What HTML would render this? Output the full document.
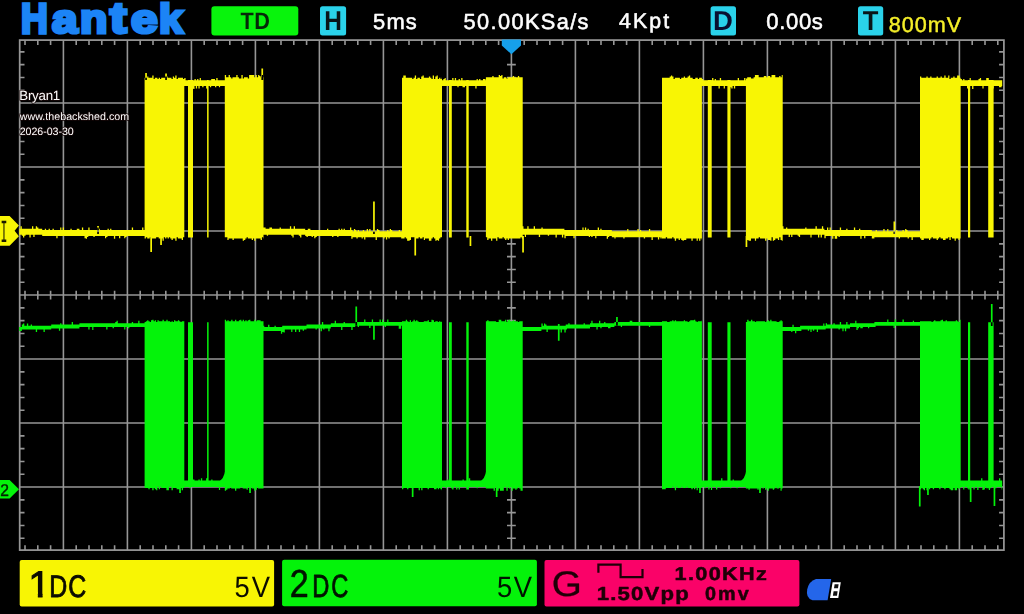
<!DOCTYPE html>
<html><head><meta charset="utf-8"><title>Hantek</title>
<style>
html,body{margin:0;padding:0;background:#000;}
body{width:1024px;height:614px;overflow:hidden;position:relative;}
svg{position:absolute;left:0;top:0;display:block;}
#labels{opacity:0.999;}
text{font-family:"Liberation Sans",sans-serif;white-space:pre;text-rendering:geometricPrecision;}
#logo{position:absolute;left:0;height:0;width:200px;font-family:"Liberation Sans",sans-serif;font-weight:bold;color:#1c84f6;-webkit-text-stroke:3.4px #1c84f6;line-height:1;white-space:nowrap;}
#logo span{position:absolute;top:0;transform-origin:0 84.65%;line-height:1;}
</style></head><body>
<svg width="1024" height="614" viewBox="0 0 1024 614">
<defs><clipPath id="c12"><path d="M30.60 569.20H42.55V598.20H37.86V592.24H30.60Z"/></clipPath></defs><rect width="1024" height="614" fill="#000"/>
<g id="grid" fill="none"><path d="M63.40 40.10L63.40 550.10" stroke="#969696" stroke-width="1.6"/><path d="M127.40 40.10L127.40 550.10" stroke="#969696" stroke-width="1.6"/><path d="M191.40 40.10L191.40 550.10" stroke="#969696" stroke-width="1.6"/><path d="M255.40 40.10L255.40 550.10" stroke="#969696" stroke-width="1.6"/><path d="M319.40 40.10L319.40 550.10" stroke="#969696" stroke-width="1.6"/><path d="M383.40 40.10L383.40 550.10" stroke="#969696" stroke-width="1.6"/><path d="M447.40 40.10L447.40 550.10" stroke="#969696" stroke-width="1.6"/><path d="M511.40 40.10L511.40 550.10" stroke="#969696" stroke-width="1.6"/><path d="M575.40 40.10L575.40 550.10" stroke="#969696" stroke-width="1.6"/><path d="M639.40 40.10L639.40 550.10" stroke="#969696" stroke-width="1.6"/><path d="M703.40 40.10L703.40 550.10" stroke="#969696" stroke-width="1.6"/><path d="M767.40 40.10L767.40 550.10" stroke="#969696" stroke-width="1.6"/><path d="M831.40 40.10L831.40 550.10" stroke="#969696" stroke-width="1.6"/><path d="M895.40 40.10L895.40 550.10" stroke="#969696" stroke-width="1.6"/><path d="M959.40 40.10L959.40 550.10" stroke="#969696" stroke-width="1.6"/><path d="M19.70 103.04L1003.90 103.04" stroke="#969696" stroke-width="1.6"/><path d="M19.70 167.04L1003.90 167.04" stroke="#969696" stroke-width="1.6"/><path d="M19.70 231.04L1003.90 231.04" stroke="#969696" stroke-width="1.6"/><path d="M19.70 295.04L1003.90 295.04" stroke="#969696" stroke-width="1.6"/><path d="M19.70 359.04L1003.90 359.04" stroke="#969696" stroke-width="1.6"/><path d="M19.70 423.04L1003.90 423.04" stroke="#969696" stroke-width="1.6"/><path d="M19.70 487.04L1003.90 487.04" stroke="#969696" stroke-width="1.6"/><rect x="19.7" y="40.1" width="984.20" height="510.00" fill="none" stroke="#969696" stroke-width="1.75"/><path d="M25.00 40.1v4.8M25.00 550.1v-4.8M25.00 290.64v8.8M37.80 40.1v4.8M37.80 550.1v-4.8M37.80 290.64v8.8M50.60 40.1v4.8M50.60 550.1v-4.8M50.60 290.64v8.8M76.20 40.1v4.8M76.20 550.1v-4.8M76.20 290.64v8.8M89.00 40.1v4.8M89.00 550.1v-4.8M89.00 290.64v8.8M101.80 40.1v4.8M101.80 550.1v-4.8M101.80 290.64v8.8M114.60 40.1v4.8M114.60 550.1v-4.8M114.60 290.64v8.8M140.20 40.1v4.8M140.20 550.1v-4.8M140.20 290.64v8.8M153.00 40.1v4.8M153.00 550.1v-4.8M153.00 290.64v8.8M165.80 40.1v4.8M165.80 550.1v-4.8M165.80 290.64v8.8M178.60 40.1v4.8M178.60 550.1v-4.8M178.60 290.64v8.8M204.20 40.1v4.8M204.20 550.1v-4.8M204.20 290.64v8.8M217.00 40.1v4.8M217.00 550.1v-4.8M217.00 290.64v8.8M229.80 40.1v4.8M229.80 550.1v-4.8M229.80 290.64v8.8M242.60 40.1v4.8M242.60 550.1v-4.8M242.60 290.64v8.8M268.20 40.1v4.8M268.20 550.1v-4.8M268.20 290.64v8.8M281.00 40.1v4.8M281.00 550.1v-4.8M281.00 290.64v8.8M293.80 40.1v4.8M293.80 550.1v-4.8M293.80 290.64v8.8M306.60 40.1v4.8M306.60 550.1v-4.8M306.60 290.64v8.8M332.20 40.1v4.8M332.20 550.1v-4.8M332.20 290.64v8.8M345.00 40.1v4.8M345.00 550.1v-4.8M345.00 290.64v8.8M357.80 40.1v4.8M357.80 550.1v-4.8M357.80 290.64v8.8M370.60 40.1v4.8M370.60 550.1v-4.8M370.60 290.64v8.8M396.20 40.1v4.8M396.20 550.1v-4.8M396.20 290.64v8.8M409.00 40.1v4.8M409.00 550.1v-4.8M409.00 290.64v8.8M421.80 40.1v4.8M421.80 550.1v-4.8M421.80 290.64v8.8M434.60 40.1v4.8M434.60 550.1v-4.8M434.60 290.64v8.8M460.20 40.1v4.8M460.20 550.1v-4.8M460.20 290.64v8.8M473.00 40.1v4.8M473.00 550.1v-4.8M473.00 290.64v8.8M485.80 40.1v4.8M485.80 550.1v-4.8M485.80 290.64v8.8M498.60 40.1v4.8M498.60 550.1v-4.8M498.60 290.64v8.8M524.20 40.1v4.8M524.20 550.1v-4.8M524.20 290.64v8.8M537.00 40.1v4.8M537.00 550.1v-4.8M537.00 290.64v8.8M549.80 40.1v4.8M549.80 550.1v-4.8M549.80 290.64v8.8M562.60 40.1v4.8M562.60 550.1v-4.8M562.60 290.64v8.8M588.20 40.1v4.8M588.20 550.1v-4.8M588.20 290.64v8.8M601.00 40.1v4.8M601.00 550.1v-4.8M601.00 290.64v8.8M613.80 40.1v4.8M613.80 550.1v-4.8M613.80 290.64v8.8M626.60 40.1v4.8M626.60 550.1v-4.8M626.60 290.64v8.8M652.20 40.1v4.8M652.20 550.1v-4.8M652.20 290.64v8.8M665.00 40.1v4.8M665.00 550.1v-4.8M665.00 290.64v8.8M677.80 40.1v4.8M677.80 550.1v-4.8M677.80 290.64v8.8M690.60 40.1v4.8M690.60 550.1v-4.8M690.60 290.64v8.8M716.20 40.1v4.8M716.20 550.1v-4.8M716.20 290.64v8.8M729.00 40.1v4.8M729.00 550.1v-4.8M729.00 290.64v8.8M741.80 40.1v4.8M741.80 550.1v-4.8M741.80 290.64v8.8M754.60 40.1v4.8M754.60 550.1v-4.8M754.60 290.64v8.8M780.20 40.1v4.8M780.20 550.1v-4.8M780.20 290.64v8.8M793.00 40.1v4.8M793.00 550.1v-4.8M793.00 290.64v8.8M805.80 40.1v4.8M805.80 550.1v-4.8M805.80 290.64v8.8M818.60 40.1v4.8M818.60 550.1v-4.8M818.60 290.64v8.8M844.20 40.1v4.8M844.20 550.1v-4.8M844.20 290.64v8.8M857.00 40.1v4.8M857.00 550.1v-4.8M857.00 290.64v8.8M869.80 40.1v4.8M869.80 550.1v-4.8M869.80 290.64v8.8M882.60 40.1v4.8M882.60 550.1v-4.8M882.60 290.64v8.8M908.20 40.1v4.8M908.20 550.1v-4.8M908.20 290.64v8.8M921.00 40.1v4.8M921.00 550.1v-4.8M921.00 290.64v8.8M933.80 40.1v4.8M933.80 550.1v-4.8M933.80 290.64v8.8M946.60 40.1v4.8M946.60 550.1v-4.8M946.60 290.64v8.8M972.20 40.1v4.8M972.20 550.1v-4.8M972.20 290.64v8.8M985.00 40.1v4.8M985.00 550.1v-4.8M985.00 290.64v8.8M997.80 40.1v4.8M997.80 550.1v-4.8M997.80 290.64v8.8M19.7 51.84h4.8M1003.9 51.84h-4.8M19.7 64.64h4.8M1003.9 64.64h-4.8M507.00 64.64h8.8M19.7 77.44h4.8M1003.9 77.44h-4.8M507.00 77.44h8.8M19.7 90.24h4.8M1003.9 90.24h-4.8M507.00 90.24h8.8M19.7 115.84h4.8M1003.9 115.84h-4.8M507.00 115.84h8.8M19.7 128.64h4.8M1003.9 128.64h-4.8M507.00 128.64h8.8M19.7 141.44h4.8M1003.9 141.44h-4.8M507.00 141.44h8.8M19.7 154.24h4.8M1003.9 154.24h-4.8M507.00 154.24h8.8M19.7 179.84h4.8M1003.9 179.84h-4.8M507.00 179.84h8.8M19.7 192.64h4.8M1003.9 192.64h-4.8M507.00 192.64h8.8M19.7 205.44h4.8M1003.9 205.44h-4.8M507.00 205.44h8.8M19.7 218.24h4.8M1003.9 218.24h-4.8M507.00 218.24h8.8M19.7 243.84h4.8M1003.9 243.84h-4.8M507.00 243.84h8.8M19.7 256.64h4.8M1003.9 256.64h-4.8M507.00 256.64h8.8M19.7 269.44h4.8M1003.9 269.44h-4.8M507.00 269.44h8.8M19.7 282.24h4.8M1003.9 282.24h-4.8M507.00 282.24h8.8M19.7 307.84h4.8M1003.9 307.84h-4.8M507.00 307.84h8.8M19.7 320.64h4.8M1003.9 320.64h-4.8M507.00 320.64h8.8M19.7 333.44h4.8M1003.9 333.44h-4.8M507.00 333.44h8.8M19.7 346.24h4.8M1003.9 346.24h-4.8M507.00 346.24h8.8M19.7 371.84h4.8M1003.9 371.84h-4.8M507.00 371.84h8.8M19.7 384.64h4.8M1003.9 384.64h-4.8M507.00 384.64h8.8M19.7 397.44h4.8M1003.9 397.44h-4.8M507.00 397.44h8.8M19.7 410.24h4.8M1003.9 410.24h-4.8M507.00 410.24h8.8M19.7 435.84h4.8M1003.9 435.84h-4.8M507.00 435.84h8.8M19.7 448.64h4.8M1003.9 448.64h-4.8M507.00 448.64h8.8M19.7 461.44h4.8M1003.9 461.44h-4.8M507.00 461.44h8.8M19.7 474.24h4.8M1003.9 474.24h-4.8M507.00 474.24h8.8M19.7 499.84h4.8M1003.9 499.84h-4.8M507.00 499.84h8.8M19.7 512.64h4.8M1003.9 512.64h-4.8M507.00 512.64h8.8M19.7 525.44h4.8M1003.9 525.44h-4.8M507.00 525.44h8.8M19.7 538.24h4.8M1003.9 538.24h-4.8M507.00 538.24h8.8" stroke="#969696" stroke-width="1.6" fill="none"/></g>
<g id="wave"><path fill="#f8f504" d="M144.6 77.8L145.9 77.8L145.9 77.8L147.2 77.8L147.2 76.5L148.4 76.5L148.4 77.8L149.7 77.8L149.7 77.8L151.0 77.8L151.0 77.8L152.3 77.8L152.3 75.6L153.6 75.6L153.6 79.1L154.8 79.1L154.8 77.8L156.1 77.8L156.1 77.8L157.4 77.8L157.4 79.1L158.7 79.1L158.7 77.8L160.0 77.8L160.0 79.1L161.2 79.1L161.2 77.8L162.5 77.8L162.5 77.8L163.8 77.8L163.8 77.8L165.1 77.8L165.1 76.5L166.4 76.5L166.4 76.5L167.6 76.5L167.6 77.8L168.9 77.8L168.9 77.8L170.2 77.8L170.2 77.8L171.5 77.8L171.5 79.1L172.8 79.1L172.8 76.5L174.0 76.5L174.0 77.8L175.3 77.8L175.3 75.6L176.6 75.6L176.6 79.1L177.9 79.1L177.9 77.8L179.2 77.8L179.2 77.8L180.4 77.8L180.4 77.8L181.7 77.8L181.7 77.8L183.0 77.8L183.0 79.1L184.3 79.1L184.3 77.8L184.3 77.8L184.3 237.3L184.3 237.3L184.3 237.3L183.0 237.3L183.0 239.9L181.7 239.9L181.7 238.6L180.4 238.6L180.4 238.6L179.2 238.6L179.2 238.6L177.9 238.6L177.9 237.3L176.6 237.3L176.6 240.8L175.3 240.8L175.3 238.6L174.0 238.6L174.0 238.6L172.8 238.6L172.8 239.9L171.5 239.9L171.5 238.6L170.2 238.6L170.2 237.3L168.9 237.3L168.9 238.6L167.6 238.6L167.6 237.3L166.4 237.3L166.4 238.6L165.1 238.6L165.1 237.3L163.8 237.3L163.8 240.8L162.5 240.8L162.5 238.6L161.2 238.6L161.2 238.6L160.0 238.6L160.0 238.6L158.7 238.6L158.7 237.3L157.4 237.3L157.4 237.3L156.1 237.3L156.1 238.6L154.8 238.6L154.8 238.6L153.6 238.6L153.6 238.6L152.3 238.6L152.3 238.6L151.0 238.6L151.0 237.3L149.7 237.3L149.7 238.6L148.4 238.6L148.4 238.6L147.2 238.6L147.2 237.3L145.9 237.3L145.9 238.6L144.6 238.6ZM184.3 78.0L185.6 78.0L185.6 80.3L186.9 80.3L186.9 80.3L188.1 80.3L188.1 80.3L189.4 80.3L189.4 80.3L190.7 80.3L190.7 80.3L192.0 80.3L192.0 80.3L193.3 80.3L193.3 80.3L194.5 80.3L194.5 79.1L195.8 79.1L195.8 80.3L197.1 80.3L197.1 79.1L198.4 79.1L198.4 80.3L199.7 80.3L199.7 78.0L200.9 78.0L200.9 80.3L202.2 80.3L202.2 80.3L203.5 80.3L203.5 80.3L204.8 80.3L204.8 80.3L206.1 80.3L206.1 80.3L207.3 80.3L207.3 80.3L208.6 80.3L208.6 80.3L209.9 80.3L209.9 80.3L211.2 80.3L211.2 79.1L212.5 79.1L212.5 79.1L213.7 79.1L213.7 79.1L215.0 79.1L215.0 80.3L216.3 80.3L216.3 78.0L217.6 78.0L217.6 80.3L218.9 80.3L218.9 80.3L220.1 80.3L220.1 80.3L221.4 80.3L221.4 80.3L222.7 80.3L222.7 80.3L224.0 80.3L224.0 80.3L225.3 80.3L225.3 78.0L225.3 78.0L225.3 86.1L225.3 86.1L225.3 86.1L224.0 86.1L224.0 86.1L222.7 86.1L222.7 86.1L221.4 86.1L221.4 86.1L220.1 86.1L220.1 87.3L218.9 87.3L218.9 86.1L217.6 86.1L217.6 86.1L216.3 86.1L216.3 87.3L215.0 87.3L215.0 86.1L213.7 86.1L213.7 86.1L212.5 86.1L212.5 86.1L211.2 86.1L211.2 87.3L209.9 87.3L209.9 86.1L208.6 86.1L208.6 86.1L207.3 86.1L207.3 88.4L206.1 88.4L206.1 86.1L204.8 86.1L204.8 86.1L203.5 86.1L203.5 87.3L202.2 87.3L202.2 86.1L200.9 86.1L200.9 86.1L199.7 86.1L199.7 88.4L198.4 88.4L198.4 86.1L197.1 86.1L197.1 88.4L195.8 88.4L195.8 86.1L194.5 86.1L194.5 89.0L193.3 89.0L193.3 88.4L192.0 88.4L192.0 86.1L190.7 86.1L190.7 88.4L189.4 88.4L189.4 86.1L188.1 86.1L188.1 86.1L186.9 86.1L186.9 86.1L185.6 86.1L185.6 86.1L184.3 86.1ZM188.0 80H193.0V237.6H188.0ZM207.1 80H208.6V237.6H207.1ZM224.8 75.1L226.1 75.1L226.1 77.3L227.4 77.3L227.4 77.3L228.6 77.3L228.6 75.1L229.9 75.1L229.9 77.3L231.2 77.3L231.2 78.6L232.5 78.6L232.5 77.3L233.8 77.3L233.8 77.3L235.0 77.3L235.0 77.3L236.3 77.3L236.3 75.1L237.6 75.1L237.6 77.3L238.9 77.3L238.9 78.6L240.2 78.6L240.2 78.6L241.4 78.6L241.4 75.1L242.7 75.1L242.7 78.6L244.0 78.6L244.0 77.3L245.3 77.3L245.3 77.3L246.6 77.3L246.6 77.3L247.8 77.3L247.8 78.6L249.1 78.6L249.1 75.1L250.4 75.1L250.4 75.1L251.7 75.1L251.7 75.1L253.0 75.1L253.0 75.1L254.2 75.1L254.2 77.3L255.5 77.3L255.5 75.1L256.8 75.1L256.8 77.3L258.1 77.3L258.1 75.1L259.4 75.1L259.4 76.0L260.6 76.0L260.6 77.3L261.9 77.3L261.9 75.1L263.2 75.1L263.2 77.3L263.5 77.3L263.5 238.6L263.2 238.6L263.2 237.3L261.9 237.3L261.9 239.9L260.6 239.9L260.6 238.6L259.4 238.6L259.4 238.6L258.1 238.6L258.1 238.6L256.8 238.6L256.8 238.6L255.5 238.6L255.5 240.8L254.2 240.8L254.2 238.6L253.0 238.6L253.0 239.9L251.7 239.9L251.7 238.6L250.4 238.6L250.4 238.6L249.1 238.6L249.1 238.6L247.8 238.6L247.8 237.3L246.6 237.3L246.6 238.6L245.3 238.6L245.3 239.9L244.0 239.9L244.0 240.8L242.7 240.8L242.7 238.6L241.4 238.6L241.4 238.6L240.2 238.6L240.2 238.6L238.9 238.6L238.9 238.6L237.6 238.6L237.6 238.6L236.3 238.6L236.3 238.6L235.0 238.6L235.0 238.6L233.8 238.6L233.8 239.9L232.5 239.9L232.5 238.6L231.2 238.6L231.2 238.6L229.9 238.6L229.9 238.6L228.6 238.6L228.6 239.9L227.4 239.9L227.4 237.3L226.1 237.3L226.1 237.3L224.8 237.3ZM402.0 77.8L403.3 77.8L403.3 75.6L404.6 75.6L404.6 75.6L405.8 75.6L405.8 77.8L407.1 77.8L407.1 77.8L408.4 77.8L408.4 77.8L409.7 77.8L409.7 77.8L411.0 77.8L411.0 77.8L412.2 77.8L412.2 79.1L413.5 79.1L413.5 77.8L414.8 77.8L414.8 75.6L416.1 75.6L416.1 79.1L417.4 79.1L417.4 77.8L418.6 77.8L418.6 77.8L419.9 77.8L419.9 79.1L421.2 79.1L421.2 76.5L422.5 76.5L422.5 75.6L423.8 75.6L423.8 77.8L425.0 77.8L425.0 77.8L426.3 77.8L426.3 77.8L427.6 77.8L427.6 77.8L428.9 77.8L428.9 76.5L430.2 76.5L430.2 77.8L431.4 77.8L431.4 79.1L432.7 79.1L432.7 75.6L434.0 75.6L434.0 79.1L435.3 79.1L435.3 76.5L436.6 76.5L436.6 75.6L437.8 75.6L437.8 79.1L439.1 79.1L439.1 77.8L440.4 77.8L440.4 79.1L441.7 79.1L441.7 77.8L442.0 77.8L442.0 237.3L441.7 237.3L441.7 237.3L440.4 237.3L440.4 238.6L439.1 238.6L439.1 240.8L437.8 240.8L437.8 239.9L436.6 239.9L436.6 240.8L435.3 240.8L435.3 238.6L434.0 238.6L434.0 237.3L432.7 237.3L432.7 238.6L431.4 238.6L431.4 240.8L430.2 240.8L430.2 240.8L428.9 240.8L428.9 238.6L427.6 238.6L427.6 238.6L426.3 238.6L426.3 238.6L425.0 238.6L425.0 239.9L423.8 239.9L423.8 237.3L422.5 237.3L422.5 238.6L421.2 238.6L421.2 238.6L419.9 238.6L419.9 237.3L418.6 237.3L418.6 238.6L417.4 238.6L417.4 238.6L416.1 238.6L416.1 238.6L414.8 238.6L414.8 237.3L413.5 237.3L413.5 237.3L412.2 237.3L412.2 237.3L411.0 237.3L411.0 239.9L409.7 239.9L409.7 240.8L408.4 240.8L408.4 240.8L407.1 240.8L407.1 238.6L405.8 238.6L405.8 237.3L404.6 237.3L404.6 238.6L403.3 238.6L403.3 238.6L402.0 238.6ZM442.0 80.3L443.3 80.3L443.3 79.1L444.6 79.1L444.6 78.0L445.8 78.0L445.8 80.3L447.1 80.3L447.1 80.3L448.4 80.3L448.4 80.3L449.7 80.3L449.7 80.3L451.0 80.3L451.0 80.3L452.2 80.3L452.2 78.0L453.5 78.0L453.5 80.3L454.8 80.3L454.8 78.0L456.1 78.0L456.1 80.3L457.4 80.3L457.4 80.3L458.6 80.3L458.6 79.1L459.9 79.1L459.9 80.3L461.2 80.3L461.2 78.0L462.5 78.0L462.5 80.3L463.8 80.3L463.8 80.3L465.0 80.3L465.0 80.3L466.3 80.3L466.3 80.3L467.6 80.3L467.6 80.3L468.9 80.3L468.9 80.3L470.2 80.3L470.2 80.3L471.4 80.3L471.4 80.3L472.7 80.3L472.7 80.3L474.0 80.3L474.0 80.3L475.3 80.3L475.3 80.3L476.6 80.3L476.6 79.1L477.8 79.1L477.8 80.3L479.1 80.3L479.1 79.1L480.4 79.1L480.4 80.3L481.7 80.3L481.7 80.3L483.0 80.3L483.0 79.1L484.2 79.1L484.2 79.1L485.5 79.1L485.5 80.3L486.4 80.3L486.4 86.1L485.5 86.1L485.5 86.1L484.2 86.1L484.2 86.1L483.0 86.1L483.0 86.1L481.7 86.1L481.7 86.1L480.4 86.1L480.4 86.1L479.1 86.1L479.1 86.1L477.8 86.1L477.8 86.1L476.6 86.1L476.6 88.4L475.3 88.4L475.3 86.1L474.0 86.1L474.0 86.1L472.7 86.1L472.7 86.1L471.4 86.1L471.4 86.1L470.2 86.1L470.2 86.1L468.9 86.1L468.9 86.1L467.6 86.1L467.6 86.1L466.3 86.1L466.3 86.1L465.0 86.1L465.0 87.3L463.8 87.3L463.8 87.3L462.5 87.3L462.5 86.1L461.2 86.1L461.2 86.1L459.9 86.1L459.9 86.1L458.6 86.1L458.6 87.3L457.4 87.3L457.4 86.1L456.1 86.1L456.1 86.1L454.8 86.1L454.8 86.1L453.5 86.1L453.5 86.1L452.2 86.1L452.2 86.1L451.0 86.1L451.0 87.3L449.7 87.3L449.7 86.1L448.4 86.1L448.4 86.1L447.1 86.1L447.1 86.1L445.8 86.1L445.8 86.1L444.6 86.1L444.6 86.1L443.3 86.1L443.3 86.1L442.0 86.1ZM449.0 80H451.8V237.6H449.0ZM466.3 80H468.7V237.6H466.3ZM485.9 77.3L487.2 77.3L487.2 77.3L488.5 77.3L488.5 77.3L489.7 77.3L489.7 77.3L491.0 77.3L491.0 77.3L492.3 77.3L492.3 76.0L493.6 76.0L493.6 77.3L494.9 77.3L494.9 77.3L496.1 77.3L496.1 77.3L497.4 77.3L497.4 77.3L498.7 77.3L498.7 75.1L500.0 75.1L500.0 76.0L501.3 76.0L501.3 75.1L502.5 75.1L502.5 78.6L503.8 78.6L503.8 77.3L505.1 77.3L505.1 77.3L506.4 77.3L506.4 78.6L507.7 78.6L507.7 77.3L508.9 77.3L508.9 77.3L510.2 77.3L510.2 77.3L511.5 77.3L511.5 77.3L512.8 77.3L512.8 76.0L514.1 76.0L514.1 77.3L515.3 77.3L515.3 77.3L516.6 77.3L516.6 77.3L517.9 77.3L517.9 76.0L519.2 76.0L519.2 77.3L520.5 77.3L520.5 77.3L521.7 77.3L521.7 77.3L522.7 77.3L522.7 238.6L521.7 238.6L521.7 237.3L520.5 237.3L520.5 238.6L519.2 238.6L519.2 238.6L517.9 238.6L517.9 238.6L516.6 238.6L516.6 238.6L515.3 238.6L515.3 238.6L514.1 238.6L514.1 238.6L512.8 238.6L512.8 238.6L511.5 238.6L511.5 238.6L510.2 238.6L510.2 238.6L508.9 238.6L508.9 239.9L507.7 239.9L507.7 238.6L506.4 238.6L506.4 239.9L505.1 239.9L505.1 238.6L503.8 238.6L503.8 237.3L502.5 237.3L502.5 238.6L501.3 238.6L501.3 238.6L500.0 238.6L500.0 238.6L498.7 238.6L498.7 237.3L497.4 237.3L497.4 240.8L496.1 240.8L496.1 238.6L494.9 238.6L494.9 238.6L493.6 238.6L493.6 238.6L492.3 238.6L492.3 240.8L491.0 240.8L491.0 238.6L489.7 238.6L489.7 238.6L488.5 238.6L488.5 239.9L487.2 239.9L487.2 237.3L485.9 237.3ZM662.0 77.8L663.3 77.8L663.3 77.8L664.6 77.8L664.6 77.8L665.8 77.8L665.8 77.8L667.1 77.8L667.1 77.8L668.4 77.8L668.4 77.8L669.7 77.8L669.7 76.5L671.0 76.5L671.0 75.6L672.2 75.6L672.2 76.5L673.5 76.5L673.5 79.1L674.8 79.1L674.8 77.8L676.1 77.8L676.1 77.8L677.4 77.8L677.4 77.8L678.6 77.8L678.6 77.8L679.9 77.8L679.9 79.1L681.2 79.1L681.2 77.8L682.5 77.8L682.5 77.8L683.8 77.8L683.8 76.5L685.0 76.5L685.0 77.8L686.3 77.8L686.3 77.8L687.6 77.8L687.6 76.5L688.9 76.5L688.9 75.6L690.2 75.6L690.2 77.8L691.4 77.8L691.4 77.8L692.7 77.8L692.7 79.1L694.0 79.1L694.0 79.1L695.3 79.1L695.3 77.8L696.6 77.8L696.6 77.8L697.8 77.8L697.8 79.1L699.1 79.1L699.1 77.8L700.4 77.8L700.4 77.8L701.7 77.8L701.7 77.8L701.9 77.8L701.9 239.9L701.7 239.9L701.7 238.6L700.4 238.6L700.4 240.8L699.1 240.8L699.1 238.6L697.8 238.6L697.8 240.8L696.6 240.8L696.6 238.6L695.3 238.6L695.3 238.6L694.0 238.6L694.0 238.6L692.7 238.6L692.7 240.8L691.4 240.8L691.4 238.6L690.2 238.6L690.2 238.6L688.9 238.6L688.9 238.6L687.6 238.6L687.6 238.6L686.3 238.6L686.3 239.9L685.0 239.9L685.0 239.9L683.8 239.9L683.8 240.8L682.5 240.8L682.5 239.9L681.2 239.9L681.2 238.6L679.9 238.6L679.9 239.9L678.6 239.9L678.6 238.6L677.4 238.6L677.4 238.6L676.1 238.6L676.1 240.8L674.8 240.8L674.8 238.6L673.5 238.6L673.5 237.3L672.2 237.3L672.2 238.6L671.0 238.6L671.0 238.6L669.7 238.6L669.7 238.6L668.4 238.6L668.4 238.6L667.1 238.6L667.1 237.3L665.8 237.3L665.8 238.6L664.6 238.6L664.6 238.6L663.3 238.6L663.3 238.6L662.0 238.6ZM701.9 79.1L703.2 79.1L703.2 80.3L704.5 80.3L704.5 80.3L705.7 80.3L705.7 80.3L707.0 80.3L707.0 80.3L708.3 80.3L708.3 80.3L709.6 80.3L709.6 80.3L710.9 80.3L710.9 80.3L712.1 80.3L712.1 78.0L713.4 78.0L713.4 80.3L714.7 80.3L714.7 79.1L716.0 79.1L716.0 80.3L717.3 80.3L717.3 80.3L718.5 80.3L718.5 80.3L719.8 80.3L719.8 78.0L721.1 78.0L721.1 80.3L722.4 80.3L722.4 80.3L723.7 80.3L723.7 80.3L724.9 80.3L724.9 80.3L726.2 80.3L726.2 80.3L727.5 80.3L727.5 80.3L728.8 80.3L728.8 80.3L730.1 80.3L730.1 80.3L731.3 80.3L731.3 80.3L732.6 80.3L732.6 80.3L733.9 80.3L733.9 80.3L735.2 80.3L735.2 80.3L736.5 80.3L736.5 80.3L737.7 80.3L737.7 78.0L739.0 78.0L739.0 80.3L740.3 80.3L740.3 80.3L741.6 80.3L741.6 80.3L742.9 80.3L742.9 80.3L744.1 80.3L744.1 78.0L745.4 78.0L745.4 80.3L746.4 80.3L746.4 86.1L745.4 86.1L745.4 86.1L744.1 86.1L744.1 86.1L742.9 86.1L742.9 86.1L741.6 86.1L741.6 86.1L740.3 86.1L740.3 86.1L739.0 86.1L739.0 86.1L737.7 86.1L737.7 86.1L736.5 86.1L736.5 86.1L735.2 86.1L735.2 88.4L733.9 88.4L733.9 86.1L732.6 86.1L732.6 88.4L731.3 88.4L731.3 87.3L730.1 87.3L730.1 86.1L728.8 86.1L728.8 87.3L727.5 87.3L727.5 86.1L726.2 86.1L726.2 86.1L724.9 86.1L724.9 88.4L723.7 88.4L723.7 86.1L722.4 86.1L722.4 86.1L721.1 86.1L721.1 86.1L719.8 86.1L719.8 88.4L718.5 88.4L718.5 86.1L717.3 86.1L717.3 86.1L716.0 86.1L716.0 86.1L714.7 86.1L714.7 86.1L713.4 86.1L713.4 86.1L712.1 86.1L712.1 86.1L710.9 86.1L710.9 87.3L709.6 87.3L709.6 86.1L708.3 86.1L708.3 86.1L707.0 86.1L707.0 86.1L705.7 86.1L705.7 86.1L704.5 86.1L704.5 86.1L703.2 86.1L703.2 86.1L701.9 86.1ZM707.8 80H711.7V237.6H707.8ZM727.4 80H730.5V237.6H727.4ZM745.9 78.6L747.2 78.6L747.2 77.3L748.5 77.3L748.5 77.3L749.7 77.3L749.7 77.3L751.0 77.3L751.0 78.6L752.3 78.6L752.3 78.6L753.6 78.6L753.6 77.3L754.9 77.3L754.9 75.1L756.1 75.1L756.1 75.1L757.4 75.1L757.4 75.1L758.7 75.1L758.7 77.3L760.0 77.3L760.0 77.3L761.3 77.3L761.3 77.3L762.5 77.3L762.5 77.3L763.8 77.3L763.8 76.0L765.1 76.0L765.1 76.0L766.4 76.0L766.4 77.3L767.7 77.3L767.7 76.0L768.9 76.0L768.9 76.0L770.2 76.0L770.2 77.3L771.5 77.3L771.5 75.1L772.8 75.1L772.8 75.1L774.1 75.1L774.1 75.1L775.3 75.1L775.3 77.3L776.6 77.3L776.6 77.3L777.9 77.3L777.9 77.3L779.2 77.3L779.2 76.0L780.5 76.0L780.5 77.3L781.7 77.3L781.7 75.1L782.7 75.1L782.7 240.8L781.7 240.8L781.7 239.9L780.5 239.9L780.5 237.3L779.2 237.3L779.2 239.9L777.9 239.9L777.9 238.6L776.6 238.6L776.6 238.6L775.3 238.6L775.3 239.9L774.1 239.9L774.1 240.8L772.8 240.8L772.8 237.3L771.5 237.3L771.5 240.8L770.2 240.8L770.2 239.9L768.9 239.9L768.9 239.9L767.7 239.9L767.7 238.6L766.4 238.6L766.4 240.8L765.1 240.8L765.1 238.6L763.8 238.6L763.8 238.6L762.5 238.6L762.5 238.6L761.3 238.6L761.3 238.6L760.0 238.6L760.0 237.3L758.7 237.3L758.7 238.6L757.4 238.6L757.4 238.6L756.1 238.6L756.1 240.8L754.9 240.8L754.9 238.6L753.6 238.6L753.6 238.6L752.3 238.6L752.3 238.6L751.0 238.6L751.0 240.8L749.7 240.8L749.7 240.8L748.5 240.8L748.5 239.9L747.2 239.9L747.2 238.6L745.9 238.6ZM920.0 76.5L921.3 76.5L921.3 77.8L922.6 77.8L922.6 77.8L923.8 77.8L923.8 77.8L925.1 77.8L925.1 77.8L926.4 77.8L926.4 76.5L927.7 76.5L927.7 77.8L929.0 77.8L929.0 77.8L930.2 77.8L930.2 76.5L931.5 76.5L931.5 77.8L932.8 77.8L932.8 77.8L934.1 77.8L934.1 77.8L935.4 77.8L935.4 77.8L936.6 77.8L936.6 76.5L937.9 76.5L937.9 77.8L939.2 77.8L939.2 77.8L940.5 77.8L940.5 76.5L941.8 76.5L941.8 77.8L943.0 77.8L943.0 77.8L944.3 77.8L944.3 75.6L945.6 75.6L945.6 77.8L946.9 77.8L946.9 77.8L948.2 77.8L948.2 75.6L949.4 75.6L949.4 79.1L950.7 79.1L950.7 77.8L952.0 77.8L952.0 77.8L953.3 77.8L953.3 76.5L954.6 76.5L954.6 77.8L955.8 77.8L955.8 77.8L957.1 77.8L957.1 75.6L958.4 75.6L958.4 75.6L959.7 75.6L959.7 77.8L960.6 77.8L960.6 238.6L959.7 238.6L959.7 239.9L958.4 239.9L958.4 238.6L957.1 238.6L957.1 238.6L955.8 238.6L955.8 240.8L954.6 240.8L954.6 238.6L953.3 238.6L953.3 238.6L952.0 238.6L952.0 237.3L950.7 237.3L950.7 239.9L949.4 239.9L949.4 237.3L948.2 237.3L948.2 238.6L946.9 238.6L946.9 238.6L945.6 238.6L945.6 239.9L944.3 239.9L944.3 239.9L943.0 239.9L943.0 238.6L941.8 238.6L941.8 238.6L940.5 238.6L940.5 237.3L939.2 237.3L939.2 238.6L937.9 238.6L937.9 239.9L936.6 239.9L936.6 238.6L935.4 238.6L935.4 238.6L934.1 238.6L934.1 238.6L932.8 238.6L932.8 237.3L931.5 237.3L931.5 238.6L930.2 238.6L930.2 239.9L929.0 239.9L929.0 238.6L927.7 238.6L927.7 238.6L926.4 238.6L926.4 238.6L925.1 238.6L925.1 238.6L923.8 238.6L923.8 239.9L922.6 239.9L922.6 239.9L921.3 239.9L921.3 238.6L920.0 238.6ZM960.6 79.1L961.9 79.1L961.9 80.3L963.2 80.3L963.2 79.1L964.4 79.1L964.4 80.3L965.7 80.3L965.7 80.3L967.0 80.3L967.0 80.3L968.3 80.3L968.3 80.3L969.6 80.3L969.6 78.0L970.8 78.0L970.8 80.3L972.1 80.3L972.1 80.3L973.4 80.3L973.4 80.3L974.7 80.3L974.7 80.3L976.0 80.3L976.0 80.3L977.2 80.3L977.2 80.3L978.5 80.3L978.5 79.1L979.8 79.1L979.8 78.0L981.1 78.0L981.1 80.3L982.4 80.3L982.4 80.3L983.6 80.3L983.6 80.3L984.9 80.3L984.9 80.3L986.2 80.3L986.2 78.0L987.5 78.0L987.5 78.0L988.8 78.0L988.8 80.3L990.0 80.3L990.0 80.3L991.3 80.3L991.3 80.3L992.6 80.3L992.6 80.3L993.9 80.3L993.9 80.3L995.2 80.3L995.2 80.3L996.4 80.3L996.4 80.3L997.7 80.3L997.7 80.3L999.0 80.3L999.0 80.3L1000.3 80.3L1000.3 80.3L1001.6 80.3L1001.6 80.3L1002.2 80.3L1002.2 86.1L1001.6 86.1L1001.6 87.3L1000.3 87.3L1000.3 87.3L999.0 87.3L999.0 86.1L997.7 86.1L997.7 86.1L996.4 86.1L996.4 86.1L995.2 86.1L995.2 86.1L993.9 86.1L993.9 88.4L992.6 88.4L992.6 86.1L991.3 86.1L991.3 86.1L990.0 86.1L990.0 86.1L988.8 86.1L988.8 86.1L987.5 86.1L987.5 86.1L986.2 86.1L986.2 86.1L984.9 86.1L984.9 86.1L983.6 86.1L983.6 88.4L982.4 88.4L982.4 86.1L981.1 86.1L981.1 86.1L979.8 86.1L979.8 86.1L978.5 86.1L978.5 86.1L977.2 86.1L977.2 86.1L976.0 86.1L976.0 86.1L974.7 86.1L974.7 86.1L973.4 86.1L973.4 89.0L972.1 89.0L972.1 86.1L970.8 86.1L970.8 86.1L969.6 86.1L969.6 89.0L968.3 89.0L968.3 88.4L967.0 88.4L967.0 86.1L965.7 86.1L965.7 86.1L964.4 86.1L964.4 86.1L963.2 86.1L963.2 86.1L961.9 86.1L961.9 86.1L960.6 86.1ZM968.0 80H970.2V237.6H968.0ZM988.2 80H993.6V237.6H988.2ZM19.2 228.7L20.5 228.7L20.5 226.3L21.8 226.3L21.8 228.7L23.0 228.7L23.0 228.7L24.3 228.7L24.3 228.7L25.6 228.7L25.6 228.7L26.9 228.7L26.9 228.7L28.2 228.7L28.2 228.7L29.4 228.7L29.4 228.7L30.7 228.7L30.7 228.7L32.0 228.7L32.0 226.3L33.3 226.3L33.3 228.7L34.6 228.7L34.6 228.7L35.8 228.7L35.8 226.3L37.1 226.3L37.1 227.5L38.4 227.5L38.4 228.7L39.7 228.7L39.7 228.7L41.0 228.7L41.0 228.7L42.2 228.7L42.2 230.0L43.5 230.0L43.5 230.0L44.8 230.0L44.8 228.8L46.1 228.8L46.1 230.0L47.4 230.0L47.4 230.0L48.6 230.0L48.6 228.8L49.9 228.8L49.9 230.0L51.2 230.0L51.2 230.0L52.5 230.0L52.5 228.8L53.8 228.8L53.8 230.0L55.0 230.0L55.0 230.0L56.3 230.0L56.3 230.0L57.6 230.0L57.6 230.0L58.9 230.0L58.9 230.0L60.2 230.0L60.2 227.6L61.4 227.6L61.4 230.0L62.7 230.0L62.7 227.6L64.0 227.6L64.0 230.0L65.3 230.0L65.3 230.0L66.6 230.0L66.6 230.0L67.8 230.0L67.8 230.0L69.1 230.0L69.1 230.0L70.4 230.0L70.4 228.8L71.7 228.8L71.7 230.0L73.0 230.0L73.0 230.0L74.2 230.0L74.2 230.0L75.5 230.0L75.5 230.0L76.8 230.0L76.8 228.8L78.1 228.8L78.1 228.8L79.4 228.8L79.4 230.0L80.6 230.0L80.6 230.0L81.9 230.0L81.9 227.6L83.2 227.6L83.2 230.0L84.5 230.0L84.5 230.0L85.8 230.0L85.8 230.0L87.0 230.0L87.0 230.0L88.3 230.0L88.3 227.6L89.6 227.6L89.6 230.0L90.9 230.0L90.9 230.0L92.2 230.0L92.2 230.0L93.4 230.0L93.4 230.0L94.7 230.0L94.7 230.0L96.0 230.0L96.0 230.0L97.3 230.0L97.3 227.6L98.6 227.6L98.6 228.8L99.8 228.8L99.8 230.0L101.1 230.0L101.1 230.0L102.4 230.0L102.4 230.0L103.7 230.0L103.7 230.0L105.0 230.0L105.0 230.0L106.2 230.0L106.2 230.0L107.5 230.0L107.5 228.8L108.8 228.8L108.8 230.0L110.1 230.0L110.1 228.8L111.4 228.8L111.4 230.0L112.6 230.0L112.6 230.0L113.9 230.0L113.9 230.0L115.2 230.0L115.2 230.0L116.5 230.0L116.5 230.0L117.8 230.0L117.8 230.0L119.0 230.0L119.0 230.0L120.3 230.0L120.3 230.0L121.6 230.0L121.6 230.0L122.9 230.0L122.9 230.0L124.2 230.0L124.2 230.0L125.4 230.0L125.4 230.0L126.7 230.0L126.7 230.0L128.0 230.0L128.0 230.0L129.3 230.0L129.3 230.0L130.6 230.0L130.6 230.0L131.8 230.0L131.8 227.6L133.1 227.6L133.1 230.0L134.4 230.0L134.4 230.0L135.7 230.0L135.7 230.0L137.0 230.0L137.0 230.0L138.2 230.0L138.2 230.0L139.5 230.0L139.5 230.0L140.8 230.0L140.8 230.0L142.1 230.0L142.1 227.6L143.4 227.6L143.4 230.0L144.6 230.0L144.6 227.6L145.1 227.6L145.1 236.0L144.6 236.0L144.6 236.0L143.4 236.0L143.4 236.0L142.1 236.0L142.1 236.0L140.8 236.0L140.8 236.0L139.5 236.0L139.5 236.0L138.2 236.0L138.2 236.0L137.0 236.0L137.0 236.0L135.7 236.0L135.7 236.0L134.4 236.0L134.4 236.0L133.1 236.0L133.1 236.0L131.8 236.0L131.8 236.0L130.6 236.0L130.6 236.0L129.3 236.0L129.3 236.0L128.0 236.0L128.0 236.0L126.7 236.0L126.7 237.1L125.4 237.1L125.4 238.3L124.2 238.3L124.2 236.0L122.9 236.0L122.9 236.0L121.6 236.0L121.6 236.0L120.3 236.0L120.3 238.3L119.0 238.3L119.0 236.0L117.8 236.0L117.8 236.0L116.5 236.0L116.5 236.0L115.2 236.0L115.2 238.8L113.9 238.8L113.9 236.0L112.6 236.0L112.6 236.0L111.4 236.0L111.4 236.0L110.1 236.0L110.1 236.0L108.8 236.0L108.8 236.0L107.5 236.0L107.5 237.1L106.2 237.1L106.2 238.3L105.0 238.3L105.0 236.0L103.7 236.0L103.7 236.0L102.4 236.0L102.4 236.0L101.1 236.0L101.1 236.0L99.8 236.0L99.8 236.0L98.6 236.0L98.6 236.0L97.3 236.0L97.3 236.0L96.0 236.0L96.0 236.0L94.7 236.0L94.7 237.1L93.4 237.1L93.4 236.0L92.2 236.0L92.2 236.0L90.9 236.0L90.9 236.0L89.6 236.0L89.6 236.0L88.3 236.0L88.3 237.1L87.0 237.1L87.0 238.8L85.8 238.8L85.8 238.3L84.5 238.3L84.5 236.0L83.2 236.0L83.2 236.0L81.9 236.0L81.9 236.0L80.6 236.0L80.6 236.0L79.4 236.0L79.4 236.0L78.1 236.0L78.1 236.0L76.8 236.0L76.8 236.0L75.5 236.0L75.5 236.0L74.2 236.0L74.2 236.0L73.0 236.0L73.0 236.0L71.7 236.0L71.7 236.0L70.4 236.0L70.4 236.0L69.1 236.0L69.1 236.0L67.8 236.0L67.8 236.0L66.6 236.0L66.6 236.0L65.3 236.0L65.3 236.0L64.0 236.0L64.0 236.0L62.7 236.0L62.7 236.0L61.4 236.0L61.4 236.0L60.2 236.0L60.2 236.0L58.9 236.0L58.9 236.0L57.6 236.0L57.6 238.3L56.3 238.3L56.3 236.0L55.0 236.0L55.0 236.0L53.8 236.0L53.8 236.0L52.5 236.0L52.5 236.0L51.2 236.0L51.2 236.0L49.9 236.0L49.9 236.0L48.6 236.0L48.6 236.0L47.4 236.0L47.4 236.0L46.1 236.0L46.1 236.0L44.8 236.0L44.8 236.0L43.5 236.0L43.5 236.0L42.2 236.0L42.2 234.7L41.0 234.7L41.0 234.7L39.7 234.7L39.7 234.7L38.4 234.7L38.4 234.7L37.1 234.7L37.1 234.7L35.8 234.7L35.8 234.7L34.6 234.7L34.6 237.0L33.3 237.0L33.3 234.7L32.0 234.7L32.0 234.7L30.7 234.7L30.7 237.6L29.4 237.6L29.4 234.7L28.2 234.7L28.2 234.7L26.9 234.7L26.9 234.7L25.6 234.7L25.6 235.8L24.3 235.8L24.3 237.6L23.0 237.6L23.0 235.8L21.8 235.8L21.8 234.7L20.5 234.7L20.5 234.7L19.2 234.7ZM263.0 227.5L264.3 227.5L264.3 227.5L265.6 227.5L265.6 228.7L266.8 228.7L266.8 228.7L268.1 228.7L268.1 228.7L269.4 228.7L269.4 227.5L270.7 227.5L270.7 227.5L272.0 227.5L272.0 228.7L273.2 228.7L273.2 228.7L274.5 228.7L274.5 228.7L275.8 228.7L275.8 228.7L277.1 228.7L277.1 228.7L278.4 228.7L278.4 228.7L279.6 228.7L279.6 227.5L280.9 227.5L280.9 228.7L282.2 228.7L282.2 228.7L283.5 228.7L283.5 228.7L284.8 228.7L284.8 228.7L286.0 228.7L286.0 228.7L287.3 228.7L287.3 228.7L288.6 228.7L288.6 228.7L289.9 228.7L289.9 226.3L291.2 226.3L291.2 228.7L292.4 228.7L292.4 228.7L293.7 228.7L293.7 226.3L295.0 226.3L295.0 228.7L296.3 228.7L296.3 228.7L297.6 228.7L297.6 228.7L298.8 228.7L298.8 228.7L300.1 228.7L300.1 228.7L301.4 228.7L301.4 228.7L302.7 228.7L302.7 228.7L304.0 228.7L304.0 228.7L305.2 228.7L305.2 230.0L306.5 230.0L306.5 230.0L307.8 230.0L307.8 228.8L309.1 228.8L309.1 228.8L310.4 228.8L310.4 230.0L311.6 230.0L311.6 230.0L312.9 230.0L312.9 230.0L314.2 230.0L314.2 230.0L315.5 230.0L315.5 230.0L316.8 230.0L316.8 230.0L318.0 230.0L318.0 230.0L319.3 230.0L319.3 230.0L320.6 230.0L320.6 230.0L321.9 230.0L321.9 230.0L323.2 230.0L323.2 230.0L324.4 230.0L324.4 230.0L325.7 230.0L325.7 230.0L327.0 230.0L327.0 228.8L328.3 228.8L328.3 230.0L329.6 230.0L329.6 230.0L330.8 230.0L330.8 230.0L332.1 230.0L332.1 230.0L333.4 230.0L333.4 230.0L334.7 230.0L334.7 230.0L336.0 230.0L336.0 230.0L337.2 230.0L337.2 230.0L338.5 230.0L338.5 228.8L339.8 228.8L339.8 230.0L341.1 230.0L341.1 228.8L342.4 228.8L342.4 230.0L343.6 230.0L343.6 228.8L344.9 228.8L344.9 230.0L346.2 230.0L346.2 230.0L347.5 230.0L347.5 230.0L348.8 230.0L348.8 230.0L350.0 230.0L350.0 227.6L351.3 227.6L351.3 230.0L352.6 230.0L352.6 231.2L353.9 231.2L353.9 228.9L355.2 228.9L355.2 230.1L356.4 230.1L356.4 231.2L357.7 231.2L357.7 230.1L359.0 230.1L359.0 231.2L360.3 231.2L360.3 231.2L361.6 231.2L361.6 231.2L362.8 231.2L362.8 230.1L364.1 230.1L364.1 231.2L365.4 231.2L365.4 231.2L366.7 231.2L366.7 228.9L368.0 228.9L368.0 231.2L369.2 231.2L369.2 228.9L370.5 228.9L370.5 231.2L371.8 231.2L371.8 231.2L373.1 231.2L373.1 231.2L374.4 231.2L374.4 231.2L375.6 231.2L375.6 231.2L376.9 231.2L376.9 228.9L378.2 228.9L378.2 230.1L379.5 230.1L379.5 231.2L380.8 231.2L380.8 231.2L382.0 231.2L382.0 231.2L383.3 231.2L383.3 231.2L384.6 231.2L384.6 231.2L385.9 231.2L385.9 231.2L387.2 231.2L387.2 230.1L388.4 230.1L388.4 231.2L389.7 231.2L389.7 228.9L391.0 228.9L391.0 230.1L392.3 230.1L392.3 231.2L393.6 231.2L393.6 231.2L394.8 231.2L394.8 231.2L396.1 231.2L396.1 231.2L397.4 231.2L397.4 231.2L398.7 231.2L398.7 230.1L400.0 230.1L400.0 231.2L401.2 231.2L401.2 231.2L402.5 231.2L402.5 238.4L401.2 238.4L401.2 237.2L400.0 237.2L400.0 237.2L398.7 237.2L398.7 237.2L397.4 237.2L397.4 237.2L396.1 237.2L396.1 237.2L394.8 237.2L394.8 237.2L393.6 237.2L393.6 237.2L392.3 237.2L392.3 237.2L391.0 237.2L391.0 237.2L389.7 237.2L389.7 238.4L388.4 238.4L388.4 237.2L387.2 237.2L387.2 239.6L385.9 239.6L385.9 237.2L384.6 237.2L384.6 238.4L383.3 238.4L383.3 237.2L382.0 237.2L382.0 237.2L380.8 237.2L380.8 237.2L379.5 237.2L379.5 237.2L378.2 237.2L378.2 237.2L376.9 237.2L376.9 240.1L375.6 240.1L375.6 237.2L374.4 237.2L374.4 237.2L373.1 237.2L373.1 237.2L371.8 237.2L371.8 237.2L370.5 237.2L370.5 237.2L369.2 237.2L369.2 237.2L368.0 237.2L368.0 237.2L366.7 237.2L366.7 237.2L365.4 237.2L365.4 239.6L364.1 239.6L364.1 237.2L362.8 237.2L362.8 238.4L361.6 238.4L361.6 237.2L360.3 237.2L360.3 237.2L359.0 237.2L359.0 237.2L357.7 237.2L357.7 238.4L356.4 238.4L356.4 237.2L355.2 237.2L355.2 237.2L353.9 237.2L353.9 237.2L352.6 237.2L352.6 238.8L351.3 238.8L351.3 236.0L350.0 236.0L350.0 236.0L348.8 236.0L348.8 236.0L347.5 236.0L347.5 236.0L346.2 236.0L346.2 236.0L344.9 236.0L344.9 236.0L343.6 236.0L343.6 236.0L342.4 236.0L342.4 236.0L341.1 236.0L341.1 236.0L339.8 236.0L339.8 236.0L338.5 236.0L338.5 237.1L337.2 237.1L337.2 236.0L336.0 236.0L336.0 236.0L334.7 236.0L334.7 236.0L333.4 236.0L333.4 237.1L332.1 237.1L332.1 236.0L330.8 236.0L330.8 236.0L329.6 236.0L329.6 236.0L328.3 236.0L328.3 236.0L327.0 236.0L327.0 236.0L325.7 236.0L325.7 236.0L324.4 236.0L324.4 236.0L323.2 236.0L323.2 236.0L321.9 236.0L321.9 236.0L320.6 236.0L320.6 236.0L319.3 236.0L319.3 236.0L318.0 236.0L318.0 236.0L316.8 236.0L316.8 237.1L315.5 237.1L315.5 238.3L314.2 238.3L314.2 236.0L312.9 236.0L312.9 237.1L311.6 237.1L311.6 236.0L310.4 236.0L310.4 236.0L309.1 236.0L309.1 236.0L307.8 236.0L307.8 237.1L306.5 237.1L306.5 236.0L305.2 236.0L305.2 234.7L304.0 234.7L304.0 234.7L302.7 234.7L302.7 234.7L301.4 234.7L301.4 237.6L300.1 237.6L300.1 235.8L298.8 235.8L298.8 234.7L297.6 234.7L297.6 234.7L296.3 234.7L296.3 234.7L295.0 234.7L295.0 234.7L293.7 234.7L293.7 237.6L292.4 237.6L292.4 235.8L291.2 235.8L291.2 234.7L289.9 234.7L289.9 234.7L288.6 234.7L288.6 234.7L287.3 234.7L287.3 234.7L286.0 234.7L286.0 234.7L284.8 234.7L284.8 234.7L283.5 234.7L283.5 234.7L282.2 234.7L282.2 234.7L280.9 234.7L280.9 234.7L279.6 234.7L279.6 234.7L278.4 234.7L278.4 234.7L277.1 234.7L277.1 234.7L275.8 234.7L275.8 234.7L274.5 234.7L274.5 234.7L273.2 234.7L273.2 234.7L272.0 234.7L272.0 234.7L270.7 234.7L270.7 234.7L269.4 234.7L269.4 234.7L268.1 234.7L268.1 235.8L266.8 235.8L266.8 234.7L265.6 234.7L265.6 234.7L264.3 234.7L264.3 234.7L263.0 234.7ZM522.2 226.3L523.5 226.3L523.5 228.7L524.8 228.7L524.8 228.7L526.0 228.7L526.0 228.7L527.3 228.7L527.3 226.3L528.6 226.3L528.6 228.7L529.9 228.7L529.9 228.7L531.2 228.7L531.2 228.7L532.4 228.7L532.4 228.7L533.7 228.7L533.7 226.3L535.0 226.3L535.0 228.7L536.3 228.7L536.3 228.7L537.6 228.7L537.6 228.7L538.8 228.7L538.8 228.7L540.1 228.7L540.1 228.7L541.4 228.7L541.4 227.5L542.7 227.5L542.7 228.7L544.0 228.7L544.0 228.7L545.2 228.7L545.2 228.7L546.5 228.7L546.5 228.7L547.8 228.7L547.8 228.7L549.1 228.7L549.1 228.7L550.4 228.7L550.4 228.7L551.6 228.7L551.6 228.7L552.9 228.7L552.9 228.7L554.2 228.7L554.2 228.7L555.5 228.7L555.5 228.7L556.8 228.7L556.8 228.7L558.0 228.7L558.0 228.7L559.3 228.7L559.3 228.7L560.6 228.7L560.6 228.7L561.9 228.7L561.9 228.7L563.2 228.7L563.2 228.7L564.4 228.7L564.4 230.0L565.7 230.0L565.7 230.0L567.0 230.0L567.0 230.0L568.3 230.0L568.3 230.0L569.6 230.0L569.6 230.0L570.8 230.0L570.8 230.0L572.1 230.0L572.1 230.0L573.4 230.0L573.4 230.0L574.7 230.0L574.7 230.0L576.0 230.0L576.0 230.0L577.2 230.0L577.2 230.0L578.5 230.0L578.5 230.0L579.8 230.0L579.8 230.0L581.1 230.0L581.1 230.0L582.4 230.0L582.4 227.6L583.6 227.6L583.6 230.0L584.9 230.0L584.9 227.6L586.2 227.6L586.2 230.0L587.5 230.0L587.5 228.8L588.8 228.8L588.8 230.0L590.0 230.0L590.0 230.0L591.3 230.0L591.3 230.0L592.6 230.0L592.6 230.0L593.9 230.0L593.9 230.0L595.2 230.0L595.2 230.0L596.4 230.0L596.4 230.0L597.7 230.0L597.7 227.6L599.0 227.6L599.0 230.0L600.3 230.0L600.3 228.8L601.6 228.8L601.6 230.0L602.8 230.0L602.8 230.0L604.1 230.0L604.1 230.0L605.4 230.0L605.4 230.0L606.7 230.0L606.7 230.0L608.0 230.0L608.0 230.0L609.2 230.0L609.2 230.0L610.5 230.0L610.5 230.0L611.8 230.0L611.8 231.2L613.1 231.2L613.1 231.2L614.4 231.2L614.4 231.2L615.6 231.2L615.6 231.2L616.9 231.2L616.9 231.2L618.2 231.2L618.2 231.2L619.5 231.2L619.5 231.2L620.8 231.2L620.8 231.2L622.0 231.2L622.0 231.2L623.3 231.2L623.3 231.2L624.6 231.2L624.6 231.2L625.9 231.2L625.9 231.2L627.2 231.2L627.2 228.9L628.4 228.9L628.4 231.2L629.7 231.2L629.7 231.2L631.0 231.2L631.0 231.2L632.3 231.2L632.3 231.2L633.6 231.2L633.6 231.2L634.8 231.2L634.8 231.2L636.1 231.2L636.1 231.2L637.4 231.2L637.4 228.9L638.7 228.9L638.7 231.2L640.0 231.2L640.0 230.1L641.2 230.1L641.2 231.2L642.5 231.2L642.5 231.2L643.8 231.2L643.8 231.2L645.1 231.2L645.1 231.2L646.4 231.2L646.4 231.2L647.6 231.2L647.6 231.2L648.9 231.2L648.9 228.9L650.2 228.9L650.2 231.2L651.5 231.2L651.5 231.2L652.8 231.2L652.8 231.2L654.0 231.2L654.0 231.2L655.3 231.2L655.3 231.2L656.6 231.2L656.6 231.2L657.9 231.2L657.9 231.2L659.2 231.2L659.2 231.2L660.4 231.2L660.4 231.2L661.7 231.2L661.7 231.2L662.5 231.2L662.5 237.2L661.7 237.2L661.7 238.4L660.4 238.4L660.4 237.2L659.2 237.2L659.2 239.6L657.9 239.6L657.9 237.2L656.6 237.2L656.6 237.2L655.3 237.2L655.3 237.2L654.0 237.2L654.0 237.2L652.8 237.2L652.8 240.1L651.5 240.1L651.5 237.2L650.2 237.2L650.2 237.2L648.9 237.2L648.9 237.2L647.6 237.2L647.6 237.2L646.4 237.2L646.4 237.2L645.1 237.2L645.1 238.4L643.8 238.4L643.8 237.2L642.5 237.2L642.5 237.2L641.2 237.2L641.2 237.2L640.0 237.2L640.0 237.2L638.7 237.2L638.7 237.2L637.4 237.2L637.4 237.2L636.1 237.2L636.1 237.2L634.8 237.2L634.8 237.2L633.6 237.2L633.6 237.2L632.3 237.2L632.3 237.2L631.0 237.2L631.0 237.2L629.7 237.2L629.7 237.2L628.4 237.2L628.4 237.2L627.2 237.2L627.2 237.2L625.9 237.2L625.9 237.2L624.6 237.2L624.6 238.4L623.3 238.4L623.3 237.2L622.0 237.2L622.0 237.2L620.8 237.2L620.8 237.2L619.5 237.2L619.5 237.2L618.2 237.2L618.2 237.2L616.9 237.2L616.9 237.2L615.6 237.2L615.6 238.4L614.4 238.4L614.4 237.2L613.1 237.2L613.1 237.2L611.8 237.2L611.8 236.0L610.5 236.0L610.5 236.0L609.2 236.0L609.2 237.1L608.0 237.1L608.0 238.8L606.7 238.8L606.7 236.0L605.4 236.0L605.4 236.0L604.1 236.0L604.1 236.0L602.8 236.0L602.8 236.0L601.6 236.0L601.6 236.0L600.3 236.0L600.3 236.0L599.0 236.0L599.0 236.0L597.7 236.0L597.7 236.0L596.4 236.0L596.4 238.3L595.2 238.3L595.2 236.0L593.9 236.0L593.9 236.0L592.6 236.0L592.6 237.1L591.3 237.1L591.3 236.0L590.0 236.0L590.0 237.1L588.8 237.1L588.8 236.0L587.5 236.0L587.5 236.0L586.2 236.0L586.2 236.0L584.9 236.0L584.9 236.0L583.6 236.0L583.6 236.0L582.4 236.0L582.4 236.0L581.1 236.0L581.1 236.0L579.8 236.0L579.8 236.0L578.5 236.0L578.5 236.0L577.2 236.0L577.2 236.0L576.0 236.0L576.0 236.0L574.7 236.0L574.7 238.3L573.4 238.3L573.4 236.0L572.1 236.0L572.1 236.0L570.8 236.0L570.8 236.0L569.6 236.0L569.6 236.0L568.3 236.0L568.3 236.0L567.0 236.0L567.0 236.0L565.7 236.0L565.7 238.3L564.4 238.3L564.4 234.7L563.2 234.7L563.2 237.6L561.9 237.6L561.9 234.7L560.6 234.7L560.6 234.7L559.3 234.7L559.3 234.7L558.0 234.7L558.0 234.7L556.8 234.7L556.8 237.6L555.5 237.6L555.5 234.7L554.2 234.7L554.2 234.7L552.9 234.7L552.9 234.7L551.6 234.7L551.6 234.7L550.4 234.7L550.4 234.7L549.1 234.7L549.1 235.8L547.8 235.8L547.8 234.7L546.5 234.7L546.5 234.7L545.2 234.7L545.2 234.7L544.0 234.7L544.0 234.7L542.7 234.7L542.7 234.7L541.4 234.7L541.4 234.7L540.1 234.7L540.1 237.0L538.8 237.0L538.8 234.7L537.6 234.7L537.6 234.7L536.3 234.7L536.3 234.7L535.0 234.7L535.0 234.7L533.7 234.7L533.7 234.7L532.4 234.7L532.4 234.7L531.2 234.7L531.2 234.7L529.9 234.7L529.9 234.7L528.6 234.7L528.6 234.7L527.3 234.7L527.3 234.7L526.0 234.7L526.0 237.0L524.8 237.0L524.8 234.7L523.5 234.7L523.5 234.7L522.2 234.7ZM782.2 226.3L783.5 226.3L783.5 228.7L784.8 228.7L784.8 228.7L786.0 228.7L786.0 227.5L787.3 227.5L787.3 228.7L788.6 228.7L788.6 228.7L789.9 228.7L789.9 228.7L791.2 228.7L791.2 228.7L792.4 228.7L792.4 228.7L793.7 228.7L793.7 228.7L795.0 228.7L795.0 228.7L796.3 228.7L796.3 228.7L797.6 228.7L797.6 228.7L798.8 228.7L798.8 228.7L800.1 228.7L800.1 228.7L801.4 228.7L801.4 228.7L802.7 228.7L802.7 228.7L804.0 228.7L804.0 228.7L805.2 228.7L805.2 227.5L806.5 227.5L806.5 228.7L807.8 228.7L807.8 228.7L809.1 228.7L809.1 228.7L810.4 228.7L810.4 228.7L811.6 228.7L811.6 228.7L812.9 228.7L812.9 228.7L814.2 228.7L814.2 228.7L815.5 228.7L815.5 226.3L816.8 226.3L816.8 228.7L818.0 228.7L818.0 228.7L819.3 228.7L819.3 228.7L820.6 228.7L820.6 228.7L821.9 228.7L821.9 226.3L823.2 226.3L823.2 228.7L824.4 228.7L824.4 230.0L825.7 230.0L825.7 230.0L827.0 230.0L827.0 227.6L828.3 227.6L828.3 230.0L829.6 230.0L829.6 227.6L830.8 227.6L830.8 230.0L832.1 230.0L832.1 230.0L833.4 230.0L833.4 230.0L834.7 230.0L834.7 230.0L836.0 230.0L836.0 230.0L837.2 230.0L837.2 230.0L838.5 230.0L838.5 230.0L839.8 230.0L839.8 227.6L841.1 227.6L841.1 230.0L842.4 230.0L842.4 230.0L843.6 230.0L843.6 230.0L844.9 230.0L844.9 230.0L846.2 230.0L846.2 228.8L847.5 228.8L847.5 230.0L848.8 230.0L848.8 230.0L850.0 230.0L850.0 230.0L851.3 230.0L851.3 230.0L852.6 230.0L852.6 230.0L853.9 230.0L853.9 227.6L855.2 227.6L855.2 230.0L856.4 230.0L856.4 230.0L857.7 230.0L857.7 230.0L859.0 230.0L859.0 228.8L860.3 228.8L860.3 230.0L861.6 230.0L861.6 230.0L862.8 230.0L862.8 230.0L864.1 230.0L864.1 230.0L865.4 230.0L865.4 230.0L866.7 230.0L866.7 230.0L868.0 230.0L868.0 230.0L869.2 230.0L869.2 230.0L870.5 230.0L870.5 230.0L871.8 230.0L871.8 231.2L873.1 231.2L873.1 231.2L874.4 231.2L874.4 231.2L875.6 231.2L875.6 230.1L876.9 230.1L876.9 231.2L878.2 231.2L878.2 231.2L879.5 231.2L879.5 231.2L880.8 231.2L880.8 231.2L882.0 231.2L882.0 231.2L883.3 231.2L883.3 228.9L884.6 228.9L884.6 231.2L885.9 231.2L885.9 231.2L887.2 231.2L887.2 228.9L888.4 228.9L888.4 231.2L889.7 231.2L889.7 231.2L891.0 231.2L891.0 231.2L892.3 231.2L892.3 231.2L893.6 231.2L893.6 231.2L894.8 231.2L894.8 231.2L896.1 231.2L896.1 230.1L897.4 230.1L897.4 231.2L898.7 231.2L898.7 231.2L900.0 231.2L900.0 231.2L901.2 231.2L901.2 231.2L902.5 231.2L902.5 230.1L903.8 230.1L903.8 231.2L905.1 231.2L905.1 228.9L906.4 228.9L906.4 230.1L907.6 230.1L907.6 231.2L908.9 231.2L908.9 231.2L910.2 231.2L910.2 231.2L911.5 231.2L911.5 231.2L912.8 231.2L912.8 231.2L914.0 231.2L914.0 231.2L915.3 231.2L915.3 231.2L916.6 231.2L916.6 231.2L917.9 231.2L917.9 231.2L919.2 231.2L919.2 231.2L920.4 231.2L920.4 231.2L920.5 231.2L920.5 237.2L920.4 237.2L920.4 237.2L919.2 237.2L919.2 237.2L917.9 237.2L917.9 237.2L916.6 237.2L916.6 237.2L915.3 237.2L915.3 237.2L914.0 237.2L914.0 237.2L912.8 237.2L912.8 240.1L911.5 240.1L911.5 237.2L910.2 237.2L910.2 237.2L908.9 237.2L908.9 238.4L907.6 238.4L907.6 237.2L906.4 237.2L906.4 237.2L905.1 237.2L905.1 237.2L903.8 237.2L903.8 237.2L902.5 237.2L902.5 237.2L901.2 237.2L901.2 237.2L900.0 237.2L900.0 238.4L898.7 238.4L898.7 237.2L897.4 237.2L897.4 237.2L896.1 237.2L896.1 237.2L894.8 237.2L894.8 237.2L893.6 237.2L893.6 237.2L892.3 237.2L892.3 237.2L891.0 237.2L891.0 237.2L889.7 237.2L889.7 237.2L888.4 237.2L888.4 237.2L887.2 237.2L887.2 237.2L885.9 237.2L885.9 237.2L884.6 237.2L884.6 237.2L883.3 237.2L883.3 237.2L882.0 237.2L882.0 237.2L880.8 237.2L880.8 237.2L879.5 237.2L879.5 237.2L878.2 237.2L878.2 237.2L876.9 237.2L876.9 237.2L875.6 237.2L875.6 237.2L874.4 237.2L874.4 238.4L873.1 238.4L873.1 238.4L871.8 238.4L871.8 236.0L870.5 236.0L870.5 236.0L869.2 236.0L869.2 236.0L868.0 236.0L868.0 236.0L866.7 236.0L866.7 236.0L865.4 236.0L865.4 238.3L864.1 238.3L864.1 236.0L862.8 236.0L862.8 236.0L861.6 236.0L861.6 238.8L860.3 238.8L860.3 236.0L859.0 236.0L859.0 236.0L857.7 236.0L857.7 236.0L856.4 236.0L856.4 236.0L855.2 236.0L855.2 236.0L853.9 236.0L853.9 236.0L852.6 236.0L852.6 236.0L851.3 236.0L851.3 236.0L850.0 236.0L850.0 236.0L848.8 236.0L848.8 236.0L847.5 236.0L847.5 236.0L846.2 236.0L846.2 236.0L844.9 236.0L844.9 236.0L843.6 236.0L843.6 236.0L842.4 236.0L842.4 236.0L841.1 236.0L841.1 236.0L839.8 236.0L839.8 237.1L838.5 237.1L838.5 236.0L837.2 236.0L837.2 238.8L836.0 238.8L836.0 238.8L834.7 238.8L834.7 236.0L833.4 236.0L833.4 238.8L832.1 238.8L832.1 236.0L830.8 236.0L830.8 236.0L829.6 236.0L829.6 236.0L828.3 236.0L828.3 236.0L827.0 236.0L827.0 236.0L825.7 236.0L825.7 238.3L824.4 238.3L824.4 234.7L823.2 234.7L823.2 234.7L821.9 234.7L821.9 237.6L820.6 237.6L820.6 234.7L819.3 234.7L819.3 237.6L818.0 237.6L818.0 234.7L816.8 234.7L816.8 234.7L815.5 234.7L815.5 234.7L814.2 234.7L814.2 234.7L812.9 234.7L812.9 234.7L811.6 234.7L811.6 237.6L810.4 237.6L810.4 234.7L809.1 234.7L809.1 234.7L807.8 234.7L807.8 234.7L806.5 234.7L806.5 234.7L805.2 234.7L805.2 234.7L804.0 234.7L804.0 234.7L802.7 234.7L802.7 234.7L801.4 234.7L801.4 234.7L800.1 234.7L800.1 237.0L798.8 237.0L798.8 235.8L797.6 235.8L797.6 234.7L796.3 234.7L796.3 234.7L795.0 234.7L795.0 234.7L793.7 234.7L793.7 234.7L792.4 234.7L792.4 237.0L791.2 237.0L791.2 234.7L789.9 234.7L789.9 237.0L788.6 237.0L788.6 234.7L787.3 234.7L787.3 234.7L786.0 234.7L786.0 234.7L784.8 234.7L784.8 234.7L783.5 234.7L783.5 234.7L782.2 234.7ZM150.3 236h1.7V252h-1.7ZM414.4 236h1.7V255.4h-1.7ZM522.2 236h1.7V252.5h-1.7ZM745.6 236h1.7V247h-1.7ZM160.2 236h1.7V245h-1.7ZM469.6 236h1.7V246h-1.7ZM373.1 234h1.7V201.6h-1.7ZM893.5 234h1.7V221.5h-1.7ZM97.2 234h1.7V226h-1.7ZM261.4 80h1.7V68.5h-1.7ZM145.2 80h1.7V73h-1.7ZM165.2 80h1.7V73.5h-1.7Z"/><path fill="#04f30a" d="M144.6 322.1L145.9 322.1L145.9 321.2L147.2 321.2L147.2 320.3L148.4 320.3L148.4 321.2L149.7 321.2L149.7 322.1L151.0 322.1L151.0 320.3L152.3 320.3L152.3 319.7L153.6 319.7L153.6 321.2L154.8 321.2L154.8 320.3L156.1 320.3L156.1 322.1L157.4 322.1L157.4 320.3L158.7 320.3L158.7 321.2L160.0 321.2L160.0 321.2L161.2 321.2L161.2 321.2L162.5 321.2L162.5 319.7L163.8 319.7L163.8 321.2L165.1 321.2L165.1 321.2L166.4 321.2L166.4 319.7L167.6 319.7L167.6 321.2L168.9 321.2L168.9 321.2L170.2 321.2L170.2 322.1L171.5 322.1L171.5 321.2L172.8 321.2L172.8 322.1L174.0 322.1L174.0 320.3L175.3 320.3L175.3 321.2L176.6 321.2L176.6 321.2L177.9 321.2L177.9 320.3L179.2 320.3L179.2 321.2L180.4 321.2L180.4 322.1L181.7 322.1L181.7 321.2L183.0 321.2L183.0 321.2L184.3 321.2L184.3 322.1L184.3 322.1L184.3 489.3L184.3 489.3L184.3 488.0L183.0 488.0L183.0 490.2L181.7 490.2L181.7 488.0L180.4 488.0L180.4 488.0L179.2 488.0L179.2 489.3L177.9 489.3L177.9 489.3L176.6 489.3L176.6 488.0L175.3 488.0L175.3 488.0L174.0 488.0L174.0 488.0L172.8 488.0L172.8 490.2L171.5 490.2L171.5 486.7L170.2 486.7L170.2 486.7L168.9 486.7L168.9 490.2L167.6 490.2L167.6 490.2L166.4 490.2L166.4 488.0L165.1 488.0L165.1 488.0L163.8 488.0L163.8 488.0L162.5 488.0L162.5 488.0L161.2 488.0L161.2 486.7L160.0 486.7L160.0 489.3L158.7 489.3L158.7 486.7L157.4 486.7L157.4 490.2L156.1 490.2L156.1 489.3L154.8 489.3L154.8 488.0L153.6 488.0L153.6 490.2L152.3 490.2L152.3 488.0L151.0 488.0L151.0 488.0L149.7 488.0L149.7 489.3L148.4 489.3L148.4 488.0L147.2 488.0L147.2 488.0L145.9 488.0L145.9 488.0L144.6 488.0ZM184.3 480.6L185.6 480.6L185.6 480.6L186.9 480.6L186.9 480.6L188.1 480.6L188.1 480.6L189.4 480.6L189.4 480.6L190.7 480.6L190.7 480.6L192.0 480.6L192.0 479.5L193.3 479.5L193.3 479.5L194.5 479.5L194.5 480.6L195.8 480.6L195.8 480.6L197.1 480.6L197.1 480.6L198.4 480.6L198.4 479.5L199.7 479.5L199.7 480.6L200.9 480.6L200.9 478.3L202.2 478.3L202.2 480.6L203.5 480.6L203.5 480.6L204.8 480.6L204.8 480.6L206.1 480.6L206.1 478.3L207.3 478.3L207.3 480.6L208.6 480.6L208.6 480.6L209.9 480.6L209.9 480.6L211.2 480.6L211.2 479.5L212.5 479.5L212.5 480.6L213.7 480.6L213.7 480.6L215.0 480.6L215.0 480.6L216.3 480.6L216.3 480.6L217.6 480.6L217.6 480.6L218.9 480.6L218.9 480.6L220.1 480.6L220.1 480.6L221.4 480.6L221.4 480.6L222.7 480.6L222.7 480.6L224.0 480.6L224.0 480.6L225.3 480.6L225.3 480.6L225.3 480.6L225.3 489.9L225.3 489.9L225.3 487.0L224.0 487.0L224.0 487.0L222.7 487.0L222.7 487.0L221.4 487.0L221.4 487.0L220.1 487.0L220.1 489.9L218.9 489.9L218.9 487.0L217.6 487.0L217.6 487.0L216.3 487.0L216.3 487.0L215.0 487.0L215.0 487.0L213.7 487.0L213.7 487.0L212.5 487.0L212.5 487.0L211.2 487.0L211.2 487.0L209.9 487.0L209.9 487.0L208.6 487.0L208.6 487.0L207.3 487.0L207.3 487.0L206.1 487.0L206.1 487.0L204.8 487.0L204.8 487.0L203.5 487.0L203.5 487.0L202.2 487.0L202.2 487.0L200.9 487.0L200.9 487.0L199.7 487.0L199.7 487.0L198.4 487.0L198.4 487.0L197.1 487.0L197.1 487.0L195.8 487.0L195.8 487.0L194.5 487.0L194.5 487.0L193.3 487.0L193.3 487.0L192.0 487.0L192.0 487.0L190.7 487.0L190.7 488.2L189.4 488.2L189.4 487.0L188.1 487.0L188.1 487.0L186.9 487.0L186.9 487.0L185.6 487.0L185.6 487.0L184.3 487.0ZM188.0 322.2H193.0V486H188.0ZM207.1 322.2H208.6V486H207.1ZM224.8 319.7L226.1 319.7L226.1 321.2L227.4 321.2L227.4 320.3L228.6 320.3L228.6 321.2L229.9 321.2L229.9 321.2L231.2 321.2L231.2 319.7L232.5 319.7L232.5 321.2L233.8 321.2L233.8 321.2L235.0 321.2L235.0 319.7L236.3 319.7L236.3 321.2L237.6 321.2L237.6 321.2L238.9 321.2L238.9 320.3L240.2 320.3L240.2 319.7L241.4 319.7L241.4 321.2L242.7 321.2L242.7 319.7L244.0 319.7L244.0 321.2L245.3 321.2L245.3 320.3L246.6 320.3L246.6 321.2L247.8 321.2L247.8 320.3L249.1 320.3L249.1 319.7L250.4 319.7L250.4 321.2L251.7 321.2L251.7 321.2L253.0 321.2L253.0 321.2L254.2 321.2L254.2 319.7L255.5 319.7L255.5 321.2L256.8 321.2L256.8 320.3L258.1 320.3L258.1 320.3L259.4 320.3L259.4 320.3L260.6 320.3L260.6 321.2L261.9 321.2L261.9 321.2L263.2 321.2L263.2 321.2L263.5 321.2L263.5 488.5L263.2 488.5L263.2 488.5L261.9 488.5L261.9 488.5L260.6 488.5L260.6 488.5L259.4 488.5L259.4 488.5L258.1 488.5L258.1 487.2L256.8 487.2L256.8 489.8L255.5 489.8L255.5 490.7L254.2 490.7L254.2 488.5L253.0 488.5L253.0 488.5L251.7 488.5L251.7 487.2L250.4 487.2L250.4 490.7L249.1 490.7L249.1 487.2L247.8 487.2L247.8 489.8L246.6 489.8L246.6 488.5L245.3 488.5L245.3 488.5L244.0 488.5L244.0 488.5L242.7 488.5L242.7 487.2L241.4 487.2L241.4 487.2L240.2 487.2L240.2 488.5L238.9 488.5L238.9 488.5L237.6 488.5L237.6 488.5L236.3 488.5L236.3 490.7L235.0 490.7L235.0 488.5L233.8 488.5L233.8 488.5L232.5 488.5L232.5 488.5L231.2 488.5L231.2 487.2L229.9 487.2L229.9 488.5L228.6 488.5L228.6 488.5L227.4 488.5L227.4 489.8L226.1 489.8L226.1 490.7L224.8 490.7ZM217.8 481.5 Q224.0 480.5 225.3 469 V481.5ZM402.0 321.2L403.3 321.2L403.3 321.2L404.6 321.2L404.6 321.2L405.8 321.2L405.8 319.7L407.1 319.7L407.1 321.2L408.4 321.2L408.4 322.1L409.7 322.1L409.7 320.3L411.0 320.3L411.0 322.1L412.2 322.1L412.2 321.2L413.5 321.2L413.5 319.7L414.8 319.7L414.8 321.2L416.1 321.2L416.1 320.3L417.4 320.3L417.4 321.2L418.6 321.2L418.6 322.1L419.9 322.1L419.9 322.1L421.2 322.1L421.2 322.1L422.5 322.1L422.5 322.1L423.8 322.1L423.8 321.2L425.0 321.2L425.0 321.2L426.3 321.2L426.3 321.2L427.6 321.2L427.6 320.3L428.9 320.3L428.9 322.1L430.2 322.1L430.2 322.1L431.4 322.1L431.4 319.7L432.7 319.7L432.7 320.3L434.0 320.3L434.0 322.1L435.3 322.1L435.3 321.2L436.6 321.2L436.6 321.2L437.8 321.2L437.8 322.1L439.1 322.1L439.1 321.2L440.4 321.2L440.4 322.1L441.7 322.1L441.7 321.2L442.0 321.2L442.0 490.2L441.7 490.2L441.7 489.3L440.4 489.3L440.4 488.0L439.1 488.0L439.1 489.3L437.8 489.3L437.8 488.0L436.6 488.0L436.6 489.3L435.3 489.3L435.3 489.3L434.0 489.3L434.0 488.0L432.7 488.0L432.7 488.0L431.4 488.0L431.4 488.0L430.2 488.0L430.2 488.0L428.9 488.0L428.9 489.3L427.6 489.3L427.6 488.0L426.3 488.0L426.3 488.0L425.0 488.0L425.0 488.0L423.8 488.0L423.8 488.0L422.5 488.0L422.5 490.2L421.2 490.2L421.2 488.0L419.9 488.0L419.9 490.2L418.6 490.2L418.6 488.0L417.4 488.0L417.4 488.0L416.1 488.0L416.1 488.0L414.8 488.0L414.8 488.0L413.5 488.0L413.5 488.0L412.2 488.0L412.2 488.0L411.0 488.0L411.0 488.0L409.7 488.0L409.7 488.0L408.4 488.0L408.4 489.3L407.1 489.3L407.1 488.0L405.8 488.0L405.8 488.0L404.6 488.0L404.6 488.0L403.3 488.0L403.3 489.3L402.0 489.3ZM442.0 480.6L443.3 480.6L443.3 480.6L444.6 480.6L444.6 480.6L445.8 480.6L445.8 480.6L447.1 480.6L447.1 479.5L448.4 479.5L448.4 480.6L449.7 480.6L449.7 480.6L451.0 480.6L451.0 480.6L452.2 480.6L452.2 480.6L453.5 480.6L453.5 480.6L454.8 480.6L454.8 480.6L456.1 480.6L456.1 480.6L457.4 480.6L457.4 480.6L458.6 480.6L458.6 480.6L459.9 480.6L459.9 480.6L461.2 480.6L461.2 480.6L462.5 480.6L462.5 479.5L463.8 479.5L463.8 480.6L465.0 480.6L465.0 480.6L466.3 480.6L466.3 480.6L467.6 480.6L467.6 480.6L468.9 480.6L468.9 478.3L470.2 478.3L470.2 480.6L471.4 480.6L471.4 480.6L472.7 480.6L472.7 480.6L474.0 480.6L474.0 480.6L475.3 480.6L475.3 480.6L476.6 480.6L476.6 480.6L477.8 480.6L477.8 480.6L479.1 480.6L479.1 480.6L480.4 480.6L480.4 480.6L481.7 480.6L481.7 480.6L483.0 480.6L483.0 480.6L484.2 480.6L484.2 480.6L485.5 480.6L485.5 479.5L486.4 479.5L486.4 487.0L485.5 487.0L485.5 487.0L484.2 487.0L484.2 487.0L483.0 487.0L483.0 487.0L481.7 487.0L481.7 487.0L480.4 487.0L480.4 487.0L479.1 487.0L479.1 487.0L477.8 487.0L477.8 488.2L476.6 488.2L476.6 487.0L475.3 487.0L475.3 487.0L474.0 487.0L474.0 487.0L472.7 487.0L472.7 487.0L471.4 487.0L471.4 487.0L470.2 487.0L470.2 487.0L468.9 487.0L468.9 489.4L467.6 489.4L467.6 489.4L466.3 489.4L466.3 487.0L465.0 487.0L465.0 487.0L463.8 487.0L463.8 487.0L462.5 487.0L462.5 487.0L461.2 487.0L461.2 487.0L459.9 487.0L459.9 489.4L458.6 489.4L458.6 487.0L457.4 487.0L457.4 489.4L456.1 489.4L456.1 487.0L454.8 487.0L454.8 487.0L453.5 487.0L453.5 489.4L452.2 489.4L452.2 488.2L451.0 488.2L451.0 487.0L449.7 487.0L449.7 487.0L448.4 487.0L448.4 487.0L447.1 487.0L447.1 488.2L445.8 488.2L445.8 487.0L444.6 487.0L444.6 487.0L443.3 487.0L443.3 487.0L442.0 487.0ZM449.0 322.2H451.8V486H449.0ZM466.3 322.2H468.7V486H466.3ZM485.9 321.2L487.2 321.2L487.2 320.3L488.5 320.3L488.5 321.2L489.7 321.2L489.7 321.2L491.0 321.2L491.0 321.2L492.3 321.2L492.3 321.2L493.6 321.2L493.6 321.2L494.9 321.2L494.9 321.2L496.1 321.2L496.1 322.1L497.4 322.1L497.4 322.1L498.7 322.1L498.7 319.7L500.0 319.7L500.0 319.7L501.3 319.7L501.3 321.2L502.5 321.2L502.5 321.2L503.8 321.2L503.8 321.2L505.1 321.2L505.1 319.7L506.4 319.7L506.4 322.1L507.7 322.1L507.7 320.3L508.9 320.3L508.9 319.7L510.2 319.7L510.2 321.2L511.5 321.2L511.5 321.2L512.8 321.2L512.8 320.3L514.1 320.3L514.1 321.2L515.3 321.2L515.3 321.2L516.6 321.2L516.6 321.2L517.9 321.2L517.9 322.1L519.2 322.1L519.2 321.2L520.5 321.2L520.5 321.2L521.7 321.2L521.7 321.2L522.7 321.2L522.7 490.7L521.7 490.7L521.7 490.7L520.5 490.7L520.5 488.5L519.2 488.5L519.2 487.2L517.9 487.2L517.9 488.5L516.6 488.5L516.6 489.8L515.3 489.8L515.3 488.5L514.1 488.5L514.1 488.5L512.8 488.5L512.8 490.7L511.5 490.7L511.5 487.2L510.2 487.2L510.2 488.5L508.9 488.5L508.9 487.2L507.7 487.2L507.7 490.7L506.4 490.7L506.4 487.2L505.1 487.2L505.1 487.2L503.8 487.2L503.8 490.7L502.5 490.7L502.5 490.7L501.3 490.7L501.3 490.7L500.0 490.7L500.0 488.5L498.7 488.5L498.7 490.7L497.4 490.7L497.4 488.5L496.1 488.5L496.1 487.2L494.9 487.2L494.9 490.7L493.6 490.7L493.6 488.5L492.3 488.5L492.3 488.5L491.0 488.5L491.0 488.5L489.7 488.5L489.7 488.5L488.5 488.5L488.5 488.5L487.2 488.5L487.2 488.5L485.9 488.5ZM478.9 481.5 Q485.1 480.5 486.4 469 V481.5ZM662.0 321.2L663.3 321.2L663.3 321.2L664.6 321.2L664.6 321.2L665.8 321.2L665.8 321.2L667.1 321.2L667.1 322.1L668.4 322.1L668.4 322.1L669.7 322.1L669.7 321.2L671.0 321.2L671.0 321.2L672.2 321.2L672.2 320.3L673.5 320.3L673.5 321.2L674.8 321.2L674.8 320.3L676.1 320.3L676.1 321.2L677.4 321.2L677.4 321.2L678.6 321.2L678.6 321.2L679.9 321.2L679.9 321.2L681.2 321.2L681.2 321.2L682.5 321.2L682.5 321.2L683.8 321.2L683.8 320.3L685.0 320.3L685.0 321.2L686.3 321.2L686.3 321.2L687.6 321.2L687.6 322.1L688.9 322.1L688.9 321.2L690.2 321.2L690.2 320.3L691.4 320.3L691.4 320.3L692.7 320.3L692.7 320.3L694.0 320.3L694.0 319.7L695.3 319.7L695.3 321.2L696.6 321.2L696.6 322.1L697.8 322.1L697.8 321.2L699.1 321.2L699.1 321.2L700.4 321.2L700.4 321.2L701.7 321.2L701.7 320.3L701.9 320.3L701.9 488.0L701.7 488.0L701.7 488.0L700.4 488.0L700.4 489.3L699.1 489.3L699.1 488.0L697.8 488.0L697.8 490.2L696.6 490.2L696.6 486.7L695.3 486.7L695.3 489.3L694.0 489.3L694.0 488.0L692.7 488.0L692.7 489.3L691.4 489.3L691.4 488.0L690.2 488.0L690.2 488.0L688.9 488.0L688.9 488.0L687.6 488.0L687.6 486.7L686.3 486.7L686.3 488.0L685.0 488.0L685.0 488.0L683.8 488.0L683.8 488.0L682.5 488.0L682.5 486.7L681.2 486.7L681.2 488.0L679.9 488.0L679.9 488.0L678.6 488.0L678.6 488.0L677.4 488.0L677.4 486.7L676.1 486.7L676.1 490.2L674.8 490.2L674.8 488.0L673.5 488.0L673.5 486.7L672.2 486.7L672.2 488.0L671.0 488.0L671.0 488.0L669.7 488.0L669.7 488.0L668.4 488.0L668.4 488.0L667.1 488.0L667.1 488.0L665.8 488.0L665.8 489.3L664.6 489.3L664.6 489.3L663.3 489.3L663.3 489.3L662.0 489.3ZM701.9 480.6L703.2 480.6L703.2 480.6L704.5 480.6L704.5 480.6L705.7 480.6L705.7 480.6L707.0 480.6L707.0 480.6L708.3 480.6L708.3 480.6L709.6 480.6L709.6 480.6L710.9 480.6L710.9 480.6L712.1 480.6L712.1 480.6L713.4 480.6L713.4 480.6L714.7 480.6L714.7 480.6L716.0 480.6L716.0 480.6L717.3 480.6L717.3 480.6L718.5 480.6L718.5 480.6L719.8 480.6L719.8 480.6L721.1 480.6L721.1 478.3L722.4 478.3L722.4 480.6L723.7 480.6L723.7 480.6L724.9 480.6L724.9 480.6L726.2 480.6L726.2 480.6L727.5 480.6L727.5 480.6L728.8 480.6L728.8 480.6L730.1 480.6L730.1 480.6L731.3 480.6L731.3 480.6L732.6 480.6L732.6 479.5L733.9 479.5L733.9 480.6L735.2 480.6L735.2 480.6L736.5 480.6L736.5 480.6L737.7 480.6L737.7 480.6L739.0 480.6L739.0 480.6L740.3 480.6L740.3 480.6L741.6 480.6L741.6 480.6L742.9 480.6L742.9 480.6L744.1 480.6L744.1 480.6L745.4 480.6L745.4 478.3L746.4 478.3L746.4 487.0L745.4 487.0L745.4 487.0L744.1 487.0L744.1 487.0L742.9 487.0L742.9 487.0L741.6 487.0L741.6 487.0L740.3 487.0L740.3 487.0L739.0 487.0L739.0 487.0L737.7 487.0L737.7 488.2L736.5 488.2L736.5 487.0L735.2 487.0L735.2 487.0L733.9 487.0L733.9 487.0L732.6 487.0L732.6 487.0L731.3 487.0L731.3 488.2L730.1 488.2L730.1 487.0L728.8 487.0L728.8 487.0L727.5 487.0L727.5 487.0L726.2 487.0L726.2 487.0L724.9 487.0L724.9 487.0L723.7 487.0L723.7 487.0L722.4 487.0L722.4 487.0L721.1 487.0L721.1 488.2L719.8 488.2L719.8 487.0L718.5 487.0L718.5 487.0L717.3 487.0L717.3 489.4L716.0 489.4L716.0 487.0L714.7 487.0L714.7 487.0L713.4 487.0L713.4 487.0L712.1 487.0L712.1 489.9L710.9 489.9L710.9 487.0L709.6 487.0L709.6 489.4L708.3 489.4L708.3 487.0L707.0 487.0L707.0 487.0L705.7 487.0L705.7 488.2L704.5 488.2L704.5 487.0L703.2 487.0L703.2 487.0L701.9 487.0ZM707.8 322.2H711.7V486H707.8ZM727.4 322.2H730.5V486H727.4ZM745.9 322.1L747.2 322.1L747.2 319.7L748.5 319.7L748.5 321.2L749.7 321.2L749.7 321.2L751.0 321.2L751.0 319.7L752.3 319.7L752.3 321.2L753.6 321.2L753.6 321.2L754.9 321.2L754.9 322.1L756.1 322.1L756.1 321.2L757.4 321.2L757.4 321.2L758.7 321.2L758.7 321.2L760.0 321.2L760.0 321.2L761.3 321.2L761.3 321.2L762.5 321.2L762.5 321.2L763.8 321.2L763.8 321.2L765.1 321.2L765.1 322.1L766.4 322.1L766.4 321.2L767.7 321.2L767.7 320.3L768.9 320.3L768.9 321.2L770.2 321.2L770.2 319.7L771.5 319.7L771.5 321.2L772.8 321.2L772.8 321.2L774.1 321.2L774.1 321.2L775.3 321.2L775.3 321.2L776.6 321.2L776.6 322.1L777.9 322.1L777.9 322.1L779.2 322.1L779.2 321.2L780.5 321.2L780.5 320.3L781.7 320.3L781.7 321.2L782.7 321.2L782.7 488.5L781.7 488.5L781.7 490.7L780.5 490.7L780.5 487.2L779.2 487.2L779.2 488.5L777.9 488.5L777.9 488.5L776.6 488.5L776.6 487.2L775.3 487.2L775.3 488.5L774.1 488.5L774.1 489.8L772.8 489.8L772.8 488.5L771.5 488.5L771.5 488.5L770.2 488.5L770.2 488.5L768.9 488.5L768.9 490.7L767.7 490.7L767.7 488.5L766.4 488.5L766.4 489.8L765.1 489.8L765.1 487.2L763.8 487.2L763.8 488.5L762.5 488.5L762.5 487.2L761.3 487.2L761.3 488.5L760.0 488.5L760.0 488.5L758.7 488.5L758.7 489.8L757.4 489.8L757.4 488.5L756.1 488.5L756.1 488.5L754.9 488.5L754.9 488.5L753.6 488.5L753.6 488.5L752.3 488.5L752.3 488.5L751.0 488.5L751.0 488.5L749.7 488.5L749.7 489.8L748.5 489.8L748.5 488.5L747.2 488.5L747.2 488.5L745.9 488.5ZM738.9 481.5 Q745.1 480.5 746.4 469 V481.5ZM920.0 321.2L921.3 321.2L921.3 321.2L922.6 321.2L922.6 321.2L923.8 321.2L923.8 321.2L925.1 321.2L925.1 321.2L926.4 321.2L926.4 321.2L927.7 321.2L927.7 321.2L929.0 321.2L929.0 321.2L930.2 321.2L930.2 321.2L931.5 321.2L931.5 322.1L932.8 322.1L932.8 321.2L934.1 321.2L934.1 320.3L935.4 320.3L935.4 321.2L936.6 321.2L936.6 321.2L937.9 321.2L937.9 321.2L939.2 321.2L939.2 321.2L940.5 321.2L940.5 320.3L941.8 320.3L941.8 319.7L943.0 319.7L943.0 321.2L944.3 321.2L944.3 321.2L945.6 321.2L945.6 320.3L946.9 320.3L946.9 321.2L948.2 321.2L948.2 321.2L949.4 321.2L949.4 321.2L950.7 321.2L950.7 321.2L952.0 321.2L952.0 321.2L953.3 321.2L953.3 321.2L954.6 321.2L954.6 321.2L955.8 321.2L955.8 320.3L957.1 320.3L957.1 321.2L958.4 321.2L958.4 322.1L959.7 322.1L959.7 319.7L960.6 319.7L960.6 488.0L959.7 488.0L959.7 489.3L958.4 489.3L958.4 488.0L957.1 488.0L957.1 490.2L955.8 490.2L955.8 490.2L954.6 490.2L954.6 488.0L953.3 488.0L953.3 490.2L952.0 490.2L952.0 490.2L950.7 490.2L950.7 489.3L949.4 489.3L949.4 488.0L948.2 488.0L948.2 488.0L946.9 488.0L946.9 488.0L945.6 488.0L945.6 489.3L944.3 489.3L944.3 488.0L943.0 488.0L943.0 488.0L941.8 488.0L941.8 486.7L940.5 486.7L940.5 489.3L939.2 489.3L939.2 488.0L937.9 488.0L937.9 488.0L936.6 488.0L936.6 488.0L935.4 488.0L935.4 488.0L934.1 488.0L934.1 489.3L932.8 489.3L932.8 488.0L931.5 488.0L931.5 488.0L930.2 488.0L930.2 489.3L929.0 489.3L929.0 488.0L927.7 488.0L927.7 490.2L926.4 490.2L926.4 488.0L925.1 488.0L925.1 490.2L923.8 490.2L923.8 489.3L922.6 489.3L922.6 488.0L921.3 488.0L921.3 489.3L920.0 489.3ZM960.6 480.6L961.9 480.6L961.9 480.6L963.2 480.6L963.2 480.6L964.4 480.6L964.4 480.6L965.7 480.6L965.7 480.6L967.0 480.6L967.0 480.6L968.3 480.6L968.3 480.6L969.6 480.6L969.6 480.6L970.8 480.6L970.8 480.6L972.1 480.6L972.1 480.6L973.4 480.6L973.4 480.6L974.7 480.6L974.7 480.6L976.0 480.6L976.0 480.6L977.2 480.6L977.2 480.6L978.5 480.6L978.5 480.6L979.8 480.6L979.8 480.6L981.1 480.6L981.1 478.3L982.4 478.3L982.4 480.6L983.6 480.6L983.6 480.6L984.9 480.6L984.9 480.6L986.2 480.6L986.2 480.6L987.5 480.6L987.5 480.6L988.8 480.6L988.8 480.6L990.0 480.6L990.0 480.6L991.3 480.6L991.3 480.6L992.6 480.6L992.6 480.6L993.9 480.6L993.9 480.6L995.2 480.6L995.2 480.6L996.4 480.6L996.4 480.6L997.7 480.6L997.7 480.6L999.0 480.6L999.0 478.3L1000.3 478.3L1000.3 480.6L1001.6 480.6L1001.6 480.6L1002.2 480.6L1002.2 489.4L1001.6 489.4L1001.6 487.0L1000.3 487.0L1000.3 487.0L999.0 487.0L999.0 487.0L997.7 487.0L997.7 487.0L996.4 487.0L996.4 488.2L995.2 488.2L995.2 487.0L993.9 487.0L993.9 487.0L992.6 487.0L992.6 487.0L991.3 487.0L991.3 488.2L990.0 488.2L990.0 489.9L988.8 489.9L988.8 488.2L987.5 488.2L987.5 488.2L986.2 488.2L986.2 487.0L984.9 487.0L984.9 489.4L983.6 489.4L983.6 489.9L982.4 489.9L982.4 487.0L981.1 487.0L981.1 487.0L979.8 487.0L979.8 487.0L978.5 487.0L978.5 489.9L977.2 489.9L977.2 487.0L976.0 487.0L976.0 487.0L974.7 487.0L974.7 489.4L973.4 489.4L973.4 487.0L972.1 487.0L972.1 487.0L970.8 487.0L970.8 487.0L969.6 487.0L969.6 489.4L968.3 489.4L968.3 488.2L967.0 488.2L967.0 487.0L965.7 487.0L965.7 487.0L964.4 487.0L964.4 489.4L963.2 489.4L963.2 487.0L961.9 487.0L961.9 487.0L960.6 487.0ZM968.0 322.2H970.2V486H968.0ZM988.2 322.2H993.6V486H988.2ZM19.2 327.0L20.5 327.0L20.5 327.0L21.8 327.0L21.8 324.6L23.0 324.6L23.0 323.4L24.3 323.4L24.3 325.7L25.6 325.7L25.6 325.7L26.9 325.7L26.9 323.4L28.2 323.4L28.2 325.7L29.4 325.7L29.4 325.7L30.7 325.7L30.7 324.6L32.0 324.6L32.0 325.7L33.3 325.7L33.3 325.7L34.6 325.7L34.6 325.7L35.8 325.7L35.8 325.7L37.1 325.7L37.1 325.7L38.4 325.7L38.4 325.7L39.7 325.7L39.7 325.7L41.0 325.7L41.0 325.7L42.2 325.7L42.2 325.7L43.5 325.7L43.5 325.7L44.8 325.7L44.8 325.7L46.1 325.7L46.1 325.7L47.4 325.7L47.4 325.7L48.6 325.7L48.6 325.7L49.9 325.7L49.9 325.7L51.2 325.7L51.2 324.5L52.5 324.5L52.5 324.5L53.8 324.5L53.8 324.5L55.0 324.5L55.0 324.5L56.3 324.5L56.3 324.5L57.6 324.5L57.6 324.5L58.9 324.5L58.9 324.5L60.2 324.5L60.2 323.3L61.4 323.3L61.4 324.5L62.7 324.5L62.7 324.5L64.0 324.5L64.0 324.5L65.3 324.5L65.3 324.5L66.6 324.5L66.6 324.5L67.8 324.5L67.8 324.5L69.1 324.5L69.1 324.5L70.4 324.5L70.4 324.5L71.7 324.5L71.7 322.1L73.0 322.1L73.0 324.5L74.2 324.5L74.2 324.5L75.5 324.5L75.5 324.5L76.8 324.5L76.8 324.5L78.1 324.5L78.1 324.5L79.4 324.5L79.4 323.2L80.6 323.2L80.6 323.2L81.9 323.2L81.9 323.2L83.2 323.2L83.2 323.2L84.5 323.2L84.5 323.2L85.8 323.2L85.8 323.2L87.0 323.2L87.0 323.2L88.3 323.2L88.3 323.2L89.6 323.2L89.6 323.2L90.9 323.2L90.9 323.2L92.2 323.2L92.2 323.2L93.4 323.2L93.4 323.2L94.7 323.2L94.7 323.2L96.0 323.2L96.0 323.2L97.3 323.2L97.3 323.2L98.6 323.2L98.6 323.2L99.8 323.2L99.8 323.2L101.1 323.2L101.1 323.2L102.4 323.2L102.4 323.2L103.7 323.2L103.7 323.2L105.0 323.2L105.0 323.2L106.2 323.2L106.2 323.2L107.5 323.2L107.5 323.2L108.8 323.2L108.8 323.2L110.1 323.2L110.1 323.2L111.4 323.2L111.4 323.2L112.6 323.2L112.6 323.2L113.9 323.2L113.9 323.2L115.2 323.2L115.2 322.0L116.5 322.0L116.5 320.8L117.8 320.8L117.8 323.2L119.0 323.2L119.0 323.2L120.3 323.2L120.3 323.2L121.6 323.2L121.6 323.2L122.9 323.2L122.9 323.2L124.2 323.2L124.2 323.2L125.4 323.2L125.4 323.2L126.7 323.2L126.7 323.2L128.0 323.2L128.0 323.2L129.3 323.2L129.3 323.2L130.6 323.2L130.6 323.2L131.8 323.2L131.8 322.0L133.1 322.0L133.1 323.2L134.4 323.2L134.4 323.2L135.7 323.2L135.7 323.2L137.0 323.2L137.0 323.2L138.2 323.2L138.2 320.8L139.5 320.8L139.5 323.2L140.8 323.2L140.8 323.2L142.1 323.2L142.1 323.2L143.4 323.2L143.4 323.2L144.6 323.2L144.6 323.2L145.1 323.2L145.1 327.1L144.6 327.1L144.6 327.1L143.4 327.1L143.4 327.1L142.1 327.1L142.1 327.1L140.8 327.1L140.8 327.1L139.5 327.1L139.5 327.1L138.2 327.1L138.2 327.1L137.0 327.1L137.0 327.1L135.7 327.1L135.7 327.1L134.4 327.1L134.4 327.1L133.1 327.1L133.1 327.1L131.8 327.1L131.8 327.1L130.6 327.1L130.6 327.1L129.3 327.1L129.3 328.2L128.0 328.2L128.0 327.1L126.7 327.1L126.7 327.1L125.4 327.1L125.4 329.4L124.2 329.4L124.2 327.1L122.9 327.1L122.9 327.1L121.6 327.1L121.6 327.1L120.3 327.1L120.3 327.1L119.0 327.1L119.0 327.1L117.8 327.1L117.8 327.1L116.5 327.1L116.5 327.1L115.2 327.1L115.2 327.1L113.9 327.1L113.9 328.2L112.6 328.2L112.6 327.1L111.4 327.1L111.4 327.1L110.1 327.1L110.1 327.1L108.8 327.1L108.8 327.1L107.5 327.1L107.5 329.4L106.2 329.4L106.2 327.1L105.0 327.1L105.0 327.1L103.7 327.1L103.7 327.1L102.4 327.1L102.4 327.1L101.1 327.1L101.1 327.1L99.8 327.1L99.8 327.1L98.6 327.1L98.6 327.1L97.3 327.1L97.3 327.1L96.0 327.1L96.0 327.1L94.7 327.1L94.7 327.1L93.4 327.1L93.4 329.9L92.2 329.9L92.2 327.1L90.9 327.1L90.9 327.1L89.6 327.1L89.6 329.4L88.3 329.4L88.3 327.1L87.0 327.1L87.0 327.1L85.8 327.1L85.8 327.1L84.5 327.1L84.5 327.1L83.2 327.1L83.2 327.1L81.9 327.1L81.9 327.1L80.6 327.1L80.6 327.1L79.4 327.1L79.4 328.4L78.1 328.4L78.1 328.4L76.8 328.4L76.8 328.4L75.5 328.4L75.5 328.4L74.2 328.4L74.2 328.4L73.0 328.4L73.0 328.4L71.7 328.4L71.7 328.4L70.4 328.4L70.4 328.4L69.1 328.4L69.1 328.4L67.8 328.4L67.8 328.4L66.6 328.4L66.6 328.4L65.3 328.4L65.3 328.4L64.0 328.4L64.0 328.4L62.7 328.4L62.7 328.4L61.4 328.4L61.4 328.4L60.2 328.4L60.2 330.7L58.9 330.7L58.9 328.4L57.6 328.4L57.6 328.4L56.3 328.4L56.3 328.4L55.0 328.4L55.0 328.4L53.8 328.4L53.8 328.4L52.5 328.4L52.5 328.4L51.2 328.4L51.2 329.6L49.9 329.6L49.9 329.6L48.6 329.6L48.6 329.6L47.4 329.6L47.4 329.6L46.1 329.6L46.1 329.6L44.8 329.6L44.8 332.0L43.5 332.0L43.5 329.6L42.2 329.6L42.2 329.6L41.0 329.6L41.0 329.6L39.7 329.6L39.7 329.6L38.4 329.6L38.4 329.6L37.1 329.6L37.1 332.0L35.8 332.0L35.8 329.6L34.6 329.6L34.6 329.6L33.3 329.6L33.3 329.6L32.0 329.6L32.0 329.6L30.7 329.6L30.7 329.6L29.4 329.6L29.4 329.6L28.2 329.6L28.2 329.6L26.9 329.6L26.9 329.6L25.6 329.6L25.6 329.6L24.3 329.6L24.3 329.6L23.0 329.6L23.0 329.6L21.8 329.6L21.8 330.9L20.5 330.9L20.5 330.9L19.2 330.9ZM263.0 325.8L264.3 325.8L264.3 327.0L265.6 327.0L265.6 327.0L266.8 327.0L266.8 327.0L268.1 327.0L268.1 324.7L269.4 324.7L269.4 327.0L270.7 327.0L270.7 327.0L272.0 327.0L272.0 327.0L273.2 327.0L273.2 327.0L274.5 327.0L274.5 325.8L275.8 325.8L275.8 327.0L277.1 327.0L277.1 327.0L278.4 327.0L278.4 327.0L279.6 327.0L279.6 327.0L280.9 327.0L280.9 327.0L282.2 327.0L282.2 325.7L283.5 325.7L283.5 325.7L284.8 325.7L284.8 325.7L286.0 325.7L286.0 325.7L287.3 325.7L287.3 325.7L288.6 325.7L288.6 325.7L289.9 325.7L289.9 325.7L291.2 325.7L291.2 325.7L292.4 325.7L292.4 325.7L293.7 325.7L293.7 325.7L295.0 325.7L295.0 325.7L296.3 325.7L296.3 325.7L297.6 325.7L297.6 325.7L298.8 325.7L298.8 325.7L300.1 325.7L300.1 325.7L301.4 325.7L301.4 325.7L302.7 325.7L302.7 325.7L304.0 325.7L304.0 325.7L305.2 325.7L305.2 325.7L306.5 325.7L306.5 324.5L307.8 324.5L307.8 324.5L309.1 324.5L309.1 324.5L310.4 324.5L310.4 324.5L311.6 324.5L311.6 324.5L312.9 324.5L312.9 324.5L314.2 324.5L314.2 324.5L315.5 324.5L315.5 324.5L316.8 324.5L316.8 324.5L318.0 324.5L318.0 324.5L319.3 324.5L319.3 324.5L320.6 324.5L320.6 324.5L321.9 324.5L321.9 322.1L323.2 322.1L323.2 324.5L324.4 324.5L324.4 324.5L325.7 324.5L325.7 324.5L327.0 324.5L327.0 324.5L328.3 324.5L328.3 324.5L329.6 324.5L329.6 324.5L330.8 324.5L330.8 323.2L332.1 323.2L332.1 323.2L333.4 323.2L333.4 323.2L334.7 323.2L334.7 320.8L336.0 320.8L336.0 323.2L337.2 323.2L337.2 323.2L338.5 323.2L338.5 323.2L339.8 323.2L339.8 323.2L341.1 323.2L341.1 323.2L342.4 323.2L342.4 323.2L343.6 323.2L343.6 322.0L344.9 322.0L344.9 323.2L346.2 323.2L346.2 323.2L347.5 323.2L347.5 323.2L348.8 323.2L348.8 323.2L350.0 323.2L350.0 323.2L351.3 323.2L351.3 323.2L352.6 323.2L352.6 323.2L353.9 323.2L353.9 323.2L355.2 323.2L355.2 321.9L356.4 321.9L356.4 321.9L357.7 321.9L357.7 321.9L359.0 321.9L359.0 321.9L360.3 321.9L360.3 321.9L361.6 321.9L361.6 321.9L362.8 321.9L362.8 321.9L364.1 321.9L364.1 319.6L365.4 319.6L365.4 321.9L366.7 321.9L366.7 321.9L368.0 321.9L368.0 321.9L369.2 321.9L369.2 321.9L370.5 321.9L370.5 321.9L371.8 321.9L371.8 319.6L373.1 319.6L373.1 321.9L374.4 321.9L374.4 321.9L375.6 321.9L375.6 321.9L376.9 321.9L376.9 321.9L378.2 321.9L378.2 321.9L379.5 321.9L379.5 319.6L380.8 319.6L380.8 321.9L382.0 321.9L382.0 319.6L383.3 319.6L383.3 321.9L384.6 321.9L384.6 321.9L385.9 321.9L385.9 321.9L387.2 321.9L387.2 319.6L388.4 319.6L388.4 321.9L389.7 321.9L389.7 321.9L391.0 321.9L391.0 321.9L392.3 321.9L392.3 321.9L393.6 321.9L393.6 321.9L394.8 321.9L394.8 321.9L396.1 321.9L396.1 321.9L397.4 321.9L397.4 321.9L398.7 321.9L398.7 321.9L400.0 321.9L400.0 321.9L401.2 321.9L401.2 321.9L402.5 321.9L402.5 325.8L401.2 325.8L401.2 328.7L400.0 328.7L400.0 328.7L398.7 328.7L398.7 325.8L397.4 325.8L397.4 325.8L396.1 325.8L396.1 325.8L394.8 325.8L394.8 325.8L393.6 325.8L393.6 325.8L392.3 325.8L392.3 325.8L391.0 325.8L391.0 325.8L389.7 325.8L389.7 325.8L388.4 325.8L388.4 325.8L387.2 325.8L387.2 325.8L385.9 325.8L385.9 327.0L384.6 327.0L384.6 325.8L383.3 325.8L383.3 325.8L382.0 325.8L382.0 325.8L380.8 325.8L380.8 325.8L379.5 325.8L379.5 325.8L378.2 325.8L378.2 325.8L376.9 325.8L376.9 325.8L375.6 325.8L375.6 325.8L374.4 325.8L374.4 325.8L373.1 325.8L373.1 325.8L371.8 325.8L371.8 325.8L370.5 325.8L370.5 328.1L369.2 328.1L369.2 325.8L368.0 325.8L368.0 325.8L366.7 325.8L366.7 325.8L365.4 325.8L365.4 325.8L364.1 325.8L364.1 325.8L362.8 325.8L362.8 325.8L361.6 325.8L361.6 325.8L360.3 325.8L360.3 325.8L359.0 325.8L359.0 327.0L357.7 327.0L357.7 325.8L356.4 325.8L356.4 325.8L355.2 325.8L355.2 327.1L353.9 327.1L353.9 327.1L352.6 327.1L352.6 329.9L351.3 329.9L351.3 327.1L350.0 327.1L350.0 327.1L348.8 327.1L348.8 327.1L347.5 327.1L347.5 327.1L346.2 327.1L346.2 327.1L344.9 327.1L344.9 327.1L343.6 327.1L343.6 327.1L342.4 327.1L342.4 329.9L341.1 329.9L341.1 327.1L339.8 327.1L339.8 327.1L338.5 327.1L338.5 327.1L337.2 327.1L337.2 327.1L336.0 327.1L336.0 327.1L334.7 327.1L334.7 327.1L333.4 327.1L333.4 327.1L332.1 327.1L332.1 327.1L330.8 327.1L330.8 328.4L329.6 328.4L329.6 331.2L328.3 331.2L328.3 328.4L327.0 328.4L327.0 328.4L325.7 328.4L325.7 328.4L324.4 328.4L324.4 329.5L323.2 329.5L323.2 328.4L321.9 328.4L321.9 331.2L320.6 331.2L320.6 328.4L319.3 328.4L319.3 328.4L318.0 328.4L318.0 328.4L316.8 328.4L316.8 329.5L315.5 329.5L315.5 328.4L314.2 328.4L314.2 328.4L312.9 328.4L312.9 328.4L311.6 328.4L311.6 328.4L310.4 328.4L310.4 328.4L309.1 328.4L309.1 328.4L307.8 328.4L307.8 328.4L306.5 328.4L306.5 329.6L305.2 329.6L305.2 329.6L304.0 329.6L304.0 330.8L302.7 330.8L302.7 329.6L301.4 329.6L301.4 329.6L300.1 329.6L300.1 332.0L298.8 332.0L298.8 329.6L297.6 329.6L297.6 329.6L296.3 329.6L296.3 332.0L295.0 332.0L295.0 329.6L293.7 329.6L293.7 329.6L292.4 329.6L292.4 332.0L291.2 332.0L291.2 329.6L289.9 329.6L289.9 329.6L288.6 329.6L288.6 329.6L287.3 329.6L287.3 329.6L286.0 329.6L286.0 329.6L284.8 329.6L284.8 332.5L283.5 332.5L283.5 332.0L282.2 332.0L282.2 333.8L280.9 333.8L280.9 330.9L279.6 330.9L279.6 330.9L278.4 330.9L278.4 330.9L277.1 330.9L277.1 330.9L275.8 330.9L275.8 330.9L274.5 330.9L274.5 330.9L273.2 330.9L273.2 330.9L272.0 330.9L272.0 330.9L270.7 330.9L270.7 330.9L269.4 330.9L269.4 330.9L268.1 330.9L268.1 330.9L266.8 330.9L266.8 330.9L265.6 330.9L265.6 330.9L264.3 330.9L264.3 330.9L263.0 330.9ZM522.2 327.0L523.5 327.0L523.5 327.0L524.8 327.0L524.8 327.0L526.0 327.0L526.0 327.0L527.3 327.0L527.3 327.0L528.6 327.0L528.6 327.0L529.9 327.0L529.9 327.0L531.2 327.0L531.2 327.0L532.4 327.0L532.4 327.0L533.7 327.0L533.7 327.0L535.0 327.0L535.0 327.0L536.3 327.0L536.3 327.0L537.6 327.0L537.6 327.0L538.8 327.0L538.8 327.0L540.1 327.0L540.1 327.0L541.4 327.0L541.4 323.4L542.7 323.4L542.7 325.7L544.0 325.7L544.0 323.4L545.2 323.4L545.2 324.6L546.5 324.6L546.5 325.7L547.8 325.7L547.8 325.7L549.1 325.7L549.1 325.7L550.4 325.7L550.4 325.7L551.6 325.7L551.6 325.7L552.9 325.7L552.9 325.7L554.2 325.7L554.2 325.7L555.5 325.7L555.5 325.7L556.8 325.7L556.8 325.7L558.0 325.7L558.0 325.7L559.3 325.7L559.3 325.7L560.6 325.7L560.6 325.7L561.9 325.7L561.9 325.7L563.2 325.7L563.2 325.7L564.4 325.7L564.4 325.7L565.7 325.7L565.7 324.5L567.0 324.5L567.0 324.5L568.3 324.5L568.3 323.3L569.6 323.3L569.6 324.5L570.8 324.5L570.8 324.5L572.1 324.5L572.1 324.5L573.4 324.5L573.4 324.5L574.7 324.5L574.7 324.5L576.0 324.5L576.0 324.5L577.2 324.5L577.2 324.5L578.5 324.5L578.5 324.5L579.8 324.5L579.8 324.5L581.1 324.5L581.1 324.5L582.4 324.5L582.4 324.5L583.6 324.5L583.6 323.3L584.9 323.3L584.9 324.5L586.2 324.5L586.2 324.5L587.5 324.5L587.5 324.5L588.8 324.5L588.8 324.5L590.0 324.5L590.0 323.2L591.3 323.2L591.3 320.8L592.6 320.8L592.6 323.2L593.9 323.2L593.9 323.2L595.2 323.2L595.2 323.2L596.4 323.2L596.4 323.2L597.7 323.2L597.7 323.2L599.0 323.2L599.0 320.8L600.3 320.8L600.3 323.2L601.6 323.2L601.6 323.2L602.8 323.2L602.8 323.2L604.1 323.2L604.1 322.0L605.4 322.0L605.4 323.2L606.7 323.2L606.7 323.2L608.0 323.2L608.0 323.2L609.2 323.2L609.2 323.2L610.5 323.2L610.5 323.2L611.8 323.2L611.8 323.2L613.1 323.2L613.1 323.2L614.4 323.2L614.4 321.9L615.6 321.9L615.6 321.9L616.9 321.9L616.9 321.9L618.2 321.9L618.2 321.9L619.5 321.9L619.5 321.9L620.8 321.9L620.8 321.9L622.0 321.9L622.0 321.9L623.3 321.9L623.3 321.9L624.6 321.9L624.6 321.9L625.9 321.9L625.9 321.9L627.2 321.9L627.2 321.9L628.4 321.9L628.4 321.9L629.7 321.9L629.7 320.7L631.0 320.7L631.0 320.7L632.3 320.7L632.3 321.9L633.6 321.9L633.6 321.9L634.8 321.9L634.8 321.9L636.1 321.9L636.1 321.9L637.4 321.9L637.4 321.9L638.7 321.9L638.7 321.9L640.0 321.9L640.0 321.9L641.2 321.9L641.2 321.9L642.5 321.9L642.5 321.9L643.8 321.9L643.8 321.9L645.1 321.9L645.1 321.9L646.4 321.9L646.4 321.9L647.6 321.9L647.6 321.9L648.9 321.9L648.9 321.9L650.2 321.9L650.2 321.9L651.5 321.9L651.5 321.9L652.8 321.9L652.8 321.9L654.0 321.9L654.0 321.9L655.3 321.9L655.3 321.9L656.6 321.9L656.6 321.9L657.9 321.9L657.9 321.9L659.2 321.9L659.2 321.9L660.4 321.9L660.4 321.9L661.7 321.9L661.7 321.9L662.5 321.9L662.5 325.8L661.7 325.8L661.7 325.8L660.4 325.8L660.4 325.8L659.2 325.8L659.2 325.8L657.9 325.8L657.9 325.8L656.6 325.8L656.6 325.8L655.3 325.8L655.3 325.8L654.0 325.8L654.0 325.8L652.8 325.8L652.8 325.8L651.5 325.8L651.5 325.8L650.2 325.8L650.2 327.0L648.9 327.0L648.9 325.8L647.6 325.8L647.6 325.8L646.4 325.8L646.4 325.8L645.1 325.8L645.1 325.8L643.8 325.8L643.8 325.8L642.5 325.8L642.5 325.8L641.2 325.8L641.2 325.8L640.0 325.8L640.0 325.8L638.7 325.8L638.7 325.8L637.4 325.8L637.4 325.8L636.1 325.8L636.1 325.8L634.8 325.8L634.8 325.8L633.6 325.8L633.6 325.8L632.3 325.8L632.3 325.8L631.0 325.8L631.0 325.8L629.7 325.8L629.7 325.8L628.4 325.8L628.4 325.8L627.2 325.8L627.2 325.8L625.9 325.8L625.9 325.8L624.6 325.8L624.6 325.8L623.3 325.8L623.3 325.8L622.0 325.8L622.0 327.0L620.8 327.0L620.8 325.8L619.5 325.8L619.5 325.8L618.2 325.8L618.2 325.8L616.9 325.8L616.9 325.8L615.6 325.8L615.6 325.8L614.4 325.8L614.4 327.1L613.1 327.1L613.1 327.1L611.8 327.1L611.8 327.1L610.5 327.1L610.5 328.2L609.2 328.2L609.2 328.2L608.0 328.2L608.0 327.1L606.7 327.1L606.7 327.1L605.4 327.1L605.4 327.1L604.1 327.1L604.1 327.1L602.8 327.1L602.8 327.1L601.6 327.1L601.6 328.2L600.3 328.2L600.3 327.1L599.0 327.1L599.0 327.1L597.7 327.1L597.7 329.4L596.4 329.4L596.4 327.1L595.2 327.1L595.2 327.1L593.9 327.1L593.9 327.1L592.6 327.1L592.6 327.1L591.3 327.1L591.3 327.1L590.0 327.1L590.0 328.4L588.8 328.4L588.8 328.4L587.5 328.4L587.5 328.4L586.2 328.4L586.2 328.4L584.9 328.4L584.9 328.4L583.6 328.4L583.6 328.4L582.4 328.4L582.4 328.4L581.1 328.4L581.1 328.4L579.8 328.4L579.8 328.4L578.5 328.4L578.5 328.4L577.2 328.4L577.2 328.4L576.0 328.4L576.0 328.4L574.7 328.4L574.7 328.4L573.4 328.4L573.4 328.4L572.1 328.4L572.1 328.4L570.8 328.4L570.8 328.4L569.6 328.4L569.6 328.4L568.3 328.4L568.3 328.4L567.0 328.4L567.0 329.5L565.7 329.5L565.7 332.5L564.4 332.5L564.4 329.6L563.2 329.6L563.2 329.6L561.9 329.6L561.9 332.5L560.6 332.5L560.6 329.6L559.3 329.6L559.3 329.6L558.0 329.6L558.0 329.6L556.8 329.6L556.8 329.6L555.5 329.6L555.5 329.6L554.2 329.6L554.2 329.6L552.9 329.6L552.9 329.6L551.6 329.6L551.6 329.6L550.4 329.6L550.4 329.6L549.1 329.6L549.1 329.6L547.8 329.6L547.8 332.0L546.5 332.0L546.5 329.6L545.2 329.6L545.2 329.6L544.0 329.6L544.0 329.6L542.7 329.6L542.7 329.6L541.4 329.6L541.4 330.9L540.1 330.9L540.1 330.9L538.8 330.9L538.8 330.9L537.6 330.9L537.6 330.9L536.3 330.9L536.3 330.9L535.0 330.9L535.0 330.9L533.7 330.9L533.7 330.9L532.4 330.9L532.4 330.9L531.2 330.9L531.2 330.9L529.9 330.9L529.9 330.9L528.6 330.9L528.6 330.9L527.3 330.9L527.3 330.9L526.0 330.9L526.0 330.9L524.8 330.9L524.8 330.9L523.5 330.9L523.5 330.9L522.2 330.9ZM782.2 327.0L783.5 327.0L783.5 327.0L784.8 327.0L784.8 327.0L786.0 327.0L786.0 327.0L787.3 327.0L787.3 327.0L788.6 327.0L788.6 327.0L789.9 327.0L789.9 327.0L791.2 327.0L791.2 327.0L792.4 327.0L792.4 324.7L793.7 324.7L793.7 327.0L795.0 327.0L795.0 327.0L796.3 327.0L796.3 327.0L797.6 327.0L797.6 327.0L798.8 327.0L798.8 327.0L800.1 327.0L800.1 325.8L801.4 325.8L801.4 325.7L802.7 325.7L802.7 325.7L804.0 325.7L804.0 325.7L805.2 325.7L805.2 325.7L806.5 325.7L806.5 325.7L807.8 325.7L807.8 325.7L809.1 325.7L809.1 325.7L810.4 325.7L810.4 325.7L811.6 325.7L811.6 325.7L812.9 325.7L812.9 325.7L814.2 325.7L814.2 325.7L815.5 325.7L815.5 325.7L816.8 325.7L816.8 325.7L818.0 325.7L818.0 325.7L819.3 325.7L819.3 325.7L820.6 325.7L820.6 325.7L821.9 325.7L821.9 325.7L823.2 325.7L823.2 323.4L824.4 323.4L824.4 325.7L825.7 325.7L825.7 323.3L827.0 323.3L827.0 324.5L828.3 324.5L828.3 324.5L829.6 324.5L829.6 324.5L830.8 324.5L830.8 324.5L832.1 324.5L832.1 324.5L833.4 324.5L833.4 323.3L834.7 323.3L834.7 324.5L836.0 324.5L836.0 324.5L837.2 324.5L837.2 324.5L838.5 324.5L838.5 324.5L839.8 324.5L839.8 322.1L841.1 322.1L841.1 324.5L842.4 324.5L842.4 324.5L843.6 324.5L843.6 324.5L844.9 324.5L844.9 324.5L846.2 324.5L846.2 322.1L847.5 322.1L847.5 324.5L848.8 324.5L848.8 324.5L850.0 324.5L850.0 323.2L851.3 323.2L851.3 323.2L852.6 323.2L852.6 323.2L853.9 323.2L853.9 323.2L855.2 323.2L855.2 320.8L856.4 320.8L856.4 323.2L857.7 323.2L857.7 323.2L859.0 323.2L859.0 323.2L860.3 323.2L860.3 323.2L861.6 323.2L861.6 323.2L862.8 323.2L862.8 323.2L864.1 323.2L864.1 323.2L865.4 323.2L865.4 323.2L866.7 323.2L866.7 323.2L868.0 323.2L868.0 323.2L869.2 323.2L869.2 323.2L870.5 323.2L870.5 323.2L871.8 323.2L871.8 323.2L873.1 323.2L873.1 323.2L874.4 323.2L874.4 321.9L875.6 321.9L875.6 321.9L876.9 321.9L876.9 321.9L878.2 321.9L878.2 321.9L879.5 321.9L879.5 321.9L880.8 321.9L880.8 321.9L882.0 321.9L882.0 321.9L883.3 321.9L883.3 321.9L884.6 321.9L884.6 321.9L885.9 321.9L885.9 321.9L887.2 321.9L887.2 319.6L888.4 319.6L888.4 321.9L889.7 321.9L889.7 321.9L891.0 321.9L891.0 321.9L892.3 321.9L892.3 321.9L893.6 321.9L893.6 321.9L894.8 321.9L894.8 319.6L896.1 319.6L896.1 321.9L897.4 321.9L897.4 321.9L898.7 321.9L898.7 321.9L900.0 321.9L900.0 321.9L901.2 321.9L901.2 321.9L902.5 321.9L902.5 319.6L903.8 319.6L903.8 321.9L905.1 321.9L905.1 321.9L906.4 321.9L906.4 321.9L907.6 321.9L907.6 321.9L908.9 321.9L908.9 321.9L910.2 321.9L910.2 321.9L911.5 321.9L911.5 321.9L912.8 321.9L912.8 320.7L914.0 320.7L914.0 321.9L915.3 321.9L915.3 321.9L916.6 321.9L916.6 321.9L917.9 321.9L917.9 321.9L919.2 321.9L919.2 321.9L920.4 321.9L920.4 320.7L920.5 320.7L920.5 325.8L920.4 325.8L920.4 325.8L919.2 325.8L919.2 325.8L917.9 325.8L917.9 325.8L916.6 325.8L916.6 325.8L915.3 325.8L915.3 325.8L914.0 325.8L914.0 325.8L912.8 325.8L912.8 325.8L911.5 325.8L911.5 325.8L910.2 325.8L910.2 325.8L908.9 325.8L908.9 325.8L907.6 325.8L907.6 325.8L906.4 325.8L906.4 325.8L905.1 325.8L905.1 325.8L903.8 325.8L903.8 325.8L902.5 325.8L902.5 325.8L901.2 325.8L901.2 325.8L900.0 325.8L900.0 325.8L898.7 325.8L898.7 325.8L897.4 325.8L897.4 325.8L896.1 325.8L896.1 325.8L894.8 325.8L894.8 328.1L893.6 328.1L893.6 325.8L892.3 325.8L892.3 325.8L891.0 325.8L891.0 325.8L889.7 325.8L889.7 325.8L888.4 325.8L888.4 325.8L887.2 325.8L887.2 325.8L885.9 325.8L885.9 325.8L884.6 325.8L884.6 325.8L883.3 325.8L883.3 325.8L882.0 325.8L882.0 325.8L880.8 325.8L880.8 325.8L879.5 325.8L879.5 325.8L878.2 325.8L878.2 325.8L876.9 325.8L876.9 325.8L875.6 325.8L875.6 327.0L874.4 327.0L874.4 327.1L873.1 327.1L873.1 327.1L871.8 327.1L871.8 327.1L870.5 327.1L870.5 327.1L869.2 327.1L869.2 328.2L868.0 328.2L868.0 327.1L866.7 327.1L866.7 327.1L865.4 327.1L865.4 327.1L864.1 327.1L864.1 327.1L862.8 327.1L862.8 328.2L861.6 328.2L861.6 328.2L860.3 328.2L860.3 327.1L859.0 327.1L859.0 328.2L857.7 328.2L857.7 329.9L856.4 329.9L856.4 327.1L855.2 327.1L855.2 327.1L853.9 327.1L853.9 327.1L852.6 327.1L852.6 327.1L851.3 327.1L851.3 327.1L850.0 327.1L850.0 328.4L848.8 328.4L848.8 328.4L847.5 328.4L847.5 328.4L846.2 328.4L846.2 331.2L844.9 331.2L844.9 328.4L843.6 328.4L843.6 331.2L842.4 331.2L842.4 328.4L841.1 328.4L841.1 328.4L839.8 328.4L839.8 329.5L838.5 329.5L838.5 328.4L837.2 328.4L837.2 328.4L836.0 328.4L836.0 328.4L834.7 328.4L834.7 328.4L833.4 328.4L833.4 328.4L832.1 328.4L832.1 328.4L830.8 328.4L830.8 328.4L829.6 328.4L829.6 328.4L828.3 328.4L828.3 328.4L827.0 328.4L827.0 328.4L825.7 328.4L825.7 329.6L824.4 329.6L824.4 329.6L823.2 329.6L823.2 329.6L821.9 329.6L821.9 329.6L820.6 329.6L820.6 329.6L819.3 329.6L819.3 329.6L818.0 329.6L818.0 332.0L816.8 332.0L816.8 329.6L815.5 329.6L815.5 329.6L814.2 329.6L814.2 330.8L812.9 330.8L812.9 329.6L811.6 329.6L811.6 332.0L810.4 332.0L810.4 329.6L809.1 329.6L809.1 330.8L807.8 330.8L807.8 329.6L806.5 329.6L806.5 329.6L805.2 329.6L805.2 329.6L804.0 329.6L804.0 329.6L802.7 329.6L802.7 329.6L801.4 329.6L801.4 330.9L800.1 330.9L800.1 330.9L798.8 330.9L798.8 330.9L797.6 330.9L797.6 330.9L796.3 330.9L796.3 333.2L795.0 333.2L795.0 330.9L793.7 330.9L793.7 330.9L792.4 330.9L792.4 332.1L791.2 332.1L791.2 330.9L789.9 330.9L789.9 330.9L788.6 330.9L788.6 330.9L787.3 330.9L787.3 330.9L786.0 330.9L786.0 330.9L784.8 330.9L784.8 330.9L783.5 330.9L783.5 330.9L782.2 330.9ZM355.4 326h1.7V306.6h-1.7ZM990.9 326h1.7V304h-1.7ZM616.1 326h1.7V317h-1.7ZM373.1 324h1.7V339.8h-1.7ZM557.9 324h1.7V340.7h-1.7ZM411.8 486h1.7V497h-1.7ZM495.8 486h1.7V497h-1.7ZM918.9 486h1.7V506.5h-1.7ZM969.8 486h1.7V502h-1.7ZM993.6 486h1.7V506h-1.7ZM927.1 486h1.7V495h-1.7ZM179.2 486h1.7V493h-1.7ZM249.2 486h1.7V493h-1.7ZM699.1 486h1.7V493h-1.7ZM759.1 486h1.7V493h-1.7Z"/></g>
<g id="shapes"><path fill="#16a0ea" d="M501.8 39.6H521V45.4L511.4 54.2L501.8 45.4Z"/><path fill="#f8f504" d="M0 216H9.6L18.9 225.4L14.6 230.8L18.9 236.2L9.6 245.7H0Z"/><path fill="#04f30a" d="M0 480H9.6L19 489.3L9.6 498.6H0Z"/><rect x="211.4" y="6.3" width="86.90" height="29.20" rx="3" fill="#08f40c"/><rect x="320" y="6.3" width="26.10" height="29.30" rx="2.5" fill="#2ad2ea"/><rect x="710.6" y="6.3" width="25.40" height="29.30" rx="2.5" fill="#2ad2ea"/><rect x="858" y="6.3" width="25.20" height="29.30" rx="2.5" fill="#2ad2ea"/><rect x="19.7" y="559.9" width="254.40" height="46.50" rx="2" fill="#f8f504"/><rect x="282.1" y="559.8" width="254.80" height="46.50" rx="2" fill="#04f30a"/><rect x="544.5" y="560" width="254.90" height="46.60" rx="2" fill="#fa0268"/><path d="M598.4 572.8V564.6H620.6V577.1H642.5V569.1" fill="none" stroke="#1e0008" stroke-width="2.2"/><path fill="#2466ea" d="M816 579H831.2L827.6 600.2H812.5Q805.5 598 807.2 589.5Q809 581 816 579Z"/><path fill="#fff" d="M832.6 582.3H840.8L838.3 598H830Z"/><path fill="#111" d="M834.6 584.3H838.6L838 588.3H834Z M833.6 591.2H837.6L837 595.8H832.9Z"/></g>
<g id="labels"><text transform="translate(0.5,241.9) scale(0.68,1.9)" style="font-family:'Liberation Mono',monospace" font-size="17" fill="#1a1800">I</text><text transform="translate(0.3,495.6) scale(0.92,1)" font-size="17" fill="#032003" stroke="#032003" stroke-width="0.4">2</text>
<text transform="translate(240.40,29.00) scale(0.9129,1)" font-size="23.75" font-weight="bold" fill="#06280a" letter-spacing="0.600">TD</text>
<text transform="translate(324.27,30.40) scale(0.8990,1)" font-size="27.16" font-weight="bold" fill="#0a1418">H</text>
<text transform="translate(372.99,29.30) scale(1.0000,1)" font-size="21.90" font-weight="normal" fill="#fff" letter-spacing="1.221" stroke="#fff" stroke-width="0.55" stroke-linejoin="round">5ms</text>
<text transform="translate(463.59,29.30) scale(1.0000,1)" font-size="21.76" font-weight="normal" fill="#fff" letter-spacing="1.378" stroke="#fff" stroke-width="0.55" stroke-linejoin="round">50.00KSa/s</text>
<text transform="translate(618.94,27.80) scale(1.0000,1)" font-size="21.33" font-weight="normal" fill="#fff" letter-spacing="2.108" stroke="#fff" stroke-width="0.55" stroke-linejoin="round">4Kpt</text>
<text transform="translate(713.08,30.40) scale(1.0131,1)" font-size="27.16" font-weight="bold" fill="#0a1030">D</text>
<text transform="translate(766.29,28.90) scale(1.0000,1)" font-size="22.04" font-weight="normal" fill="#fff" letter-spacing="0.675" stroke="#fff" stroke-width="0.55" stroke-linejoin="round">0.00s</text>
<text transform="translate(862.70,30.40) scale(0.9424,1)" font-size="27.16" font-weight="bold" fill="#0a1418">T</text>
<text transform="translate(888.75,31.60) scale(1.0000,1)" font-size="21.62" font-weight="normal" fill="#f6f02a" letter-spacing="1.006" stroke="#f6f02a" stroke-width="0.45" stroke-linejoin="round">800mV</text>
<text transform="translate(19.26,100.00) scale(1.0000,1)" font-size="13.33" fill="none" stroke="#1a0a0a" stroke-opacity="0.75" stroke-width="2" stroke-linejoin="round" letter-spacing=-0.251>Bryan1</text>
<text transform="translate(19.26,100.00) scale(1.0000,1)" font-size="13.33" font-weight="normal" fill="#fff" letter-spacing="-0.251">Bryan1</text>
<text transform="translate(19.77,119.70) scale(1.0000,1)" font-size="10.67" fill="none" stroke="#1a0a0a" stroke-opacity="0.75" stroke-width="2" stroke-linejoin="round" letter-spacing=0.020>www.thebackshed.com</text>
<text transform="translate(19.77,119.70) scale(1.0000,1)" font-size="10.67" font-weight="normal" fill="#fff" letter-spacing="0.020">www.thebackshed.com</text>
<text transform="translate(19.70,135.00) scale(1.0000,1)" font-size="10.67" fill="none" stroke="#1a0a0a" stroke-opacity="0.75" stroke-width="2" stroke-linejoin="round" letter-spacing=-0.057>2026-03-30</text>
<text transform="translate(19.70,135.00) scale(1.0000,1)" font-size="10.67" font-weight="normal" fill="#fff" letter-spacing="-0.057">2026-03-30</text>
<g clip-path="url(#c12)"><text transform="translate(28.19,597.20) scale(1.0988,1)" font-size="36.98" fill="#0c0c00" stroke="#0c0c00" stroke-width="1.0">1</text></g>
<text transform="translate(49.20,597.20) scale(0.8000,1)" font-size="31.15" font-weight="normal" fill="#0c0c00" letter-spacing="1.402" stroke="#0c0c00" stroke-width="0.9" stroke-linejoin="round">DC</text>
<text transform="translate(234.44,597.40) scale(0.9300,1)" font-size="29.44" font-weight="normal" fill="#0c0c00" letter-spacing="2.186">5V</text>
<text transform="translate(289.70,597.40) scale(0.8727,1)" font-size="39.11" font-weight="normal" fill="#021402" stroke="#021402" stroke-width="0.6" stroke-linejoin="round">2</text>
<text transform="translate(312.25,597.40) scale(0.7400,1)" font-size="32.00" font-weight="normal" fill="#021402" letter-spacing="2.526" stroke="#021402" stroke-width="0.8" stroke-linejoin="round">DC</text>
<text transform="translate(497.04,597.40) scale(0.9300,1)" font-size="29.44" font-weight="normal" fill="#021402" letter-spacing="1.541">5V</text>
<text transform="translate(551.64,596.40) scale(1.0886,1)" font-size="35.56" font-weight="normal" fill="#1e0008" stroke="#1e0008" stroke-width="0.3" stroke-linejoin="round">G</text>
<text transform="translate(674.60,579.90) scale(1.1700,1)" font-size="18.49" font-weight="bold" fill="#1e0008" letter-spacing="1.135" stroke="#1e0008" stroke-width="0.5" stroke-linejoin="round">1.00KHz</text>
<text transform="translate(596.67,599.90) scale(1.1700,1)" font-size="18.92" font-weight="bold" fill="#1e0008" letter-spacing="1.031" stroke="#1e0008" stroke-width="0.5" stroke-linejoin="round">1.50Vpp</text>
<text transform="translate(705.03,599.90) scale(1.0500,1)" font-size="18.92" font-weight="bold" fill="#1e0008" letter-spacing="1.925" stroke="#1e0008" stroke-width="0.5" stroke-linejoin="round">0mv</text>
</g>
</svg>
<div id="logo" style="font-size:43.02px;top:-2.92px"><span style="left:21.25px;transform:scale(0.864,1)">H</span><span style="left:51.90px;transform:scale(1.070,0.95)">a</span><span style="left:80.37px;transform:scale(1.044,0.95)">n</span><span style="left:110.28px;transform:scale(1.165,0.97)">t</span><span style="left:131.00px;transform:scale(1.116,0.95)">e</span><span style="left:159.31px;transform:scale(1.004,0.955)">k</span></div>
</body></html>
